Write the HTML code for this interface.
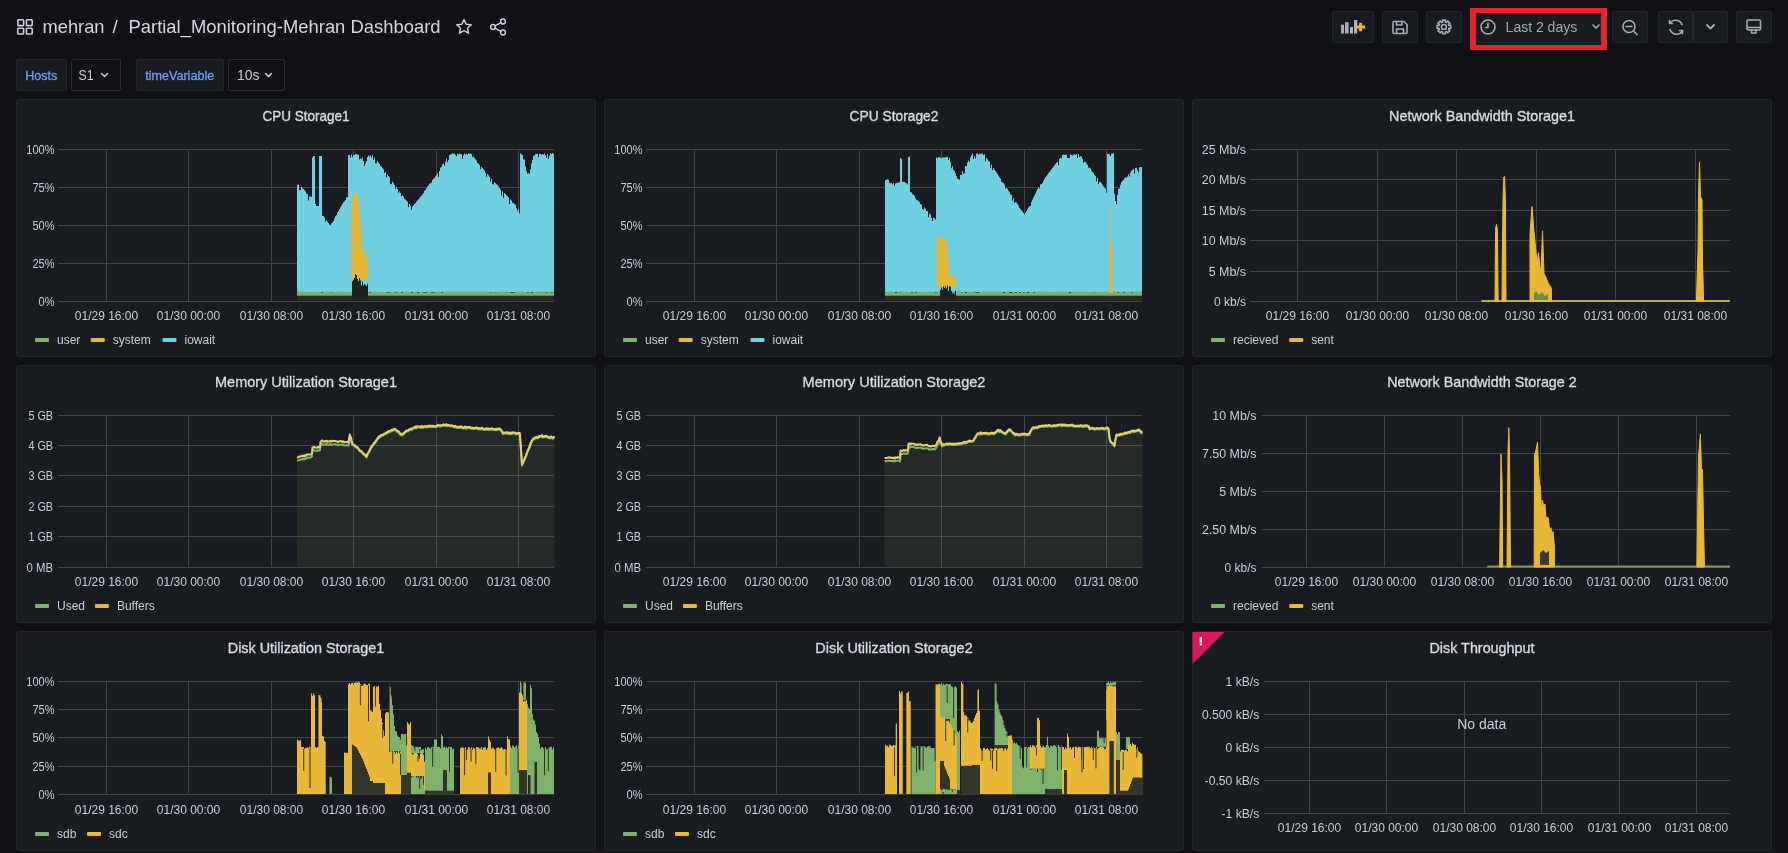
<!DOCTYPE html>
<html><head><meta charset="utf-8"><title>Grafana</title><style>
html,body{margin:0;padding:0}
body{width:1788px;height:853px;overflow:hidden;background:#111217;position:relative;font-family:"Liberation Sans",sans-serif;color:#ccccdc}
div{box-sizing:border-box}
.panel{position:absolute;background:#181b1f;border:1px solid #25272c;border-radius:3px}
.btn{position:absolute;top:11px;height:32px;background:#181b1f;border:1px solid #25272c;border-radius:2px}
.var{position:absolute;top:59px;height:32px;border-radius:2px}
</style></head><body>
<div class="panel" style="left:16px;top:99px;width:580px;height:258px"></div>
<div class="panel" style="left:604px;top:99px;width:580px;height:258px"></div>
<div class="panel" style="left:1192px;top:99px;width:580px;height:258px"></div>
<div class="panel" style="left:16px;top:365px;width:580px;height:258px"></div>
<div class="panel" style="left:604px;top:365px;width:580px;height:258px"></div>
<div class="panel" style="left:1192px;top:365px;width:580px;height:258px"></div>
<div class="panel" style="left:16px;top:631px;width:580px;height:220px"></div>
<div class="panel" style="left:604px;top:631px;width:580px;height:220px"></div>
<div class="panel" style="left:1192px;top:631px;width:580px;height:220px"></div>
<div class="var" style="left:16px;width:51px;background:#181b1f;border:1px solid #25272c"></div>
<div class="var" style="left:71px;width:50px;background:#111217;border:1px solid #2c2e33"></div>
<div class="var" style="left:136px;width:88px;background:#181b1f;border:1px solid #25272c"></div>
<div class="var" style="left:228px;width:57px;background:#111217;border:1px solid #2c2e33"></div>
<div class="btn" style="left:1332px;width:42px"></div>
<div class="btn" style="left:1382px;width:36px"></div>
<div class="btn" style="left:1426px;width:36px"></div>
<div class="btn" style="left:1476px;width:125px"></div>
<div class="btn" style="left:1612px;width:36px"></div>
<div class="btn" style="left:1658px;width:35px"></div>
<div class="btn" style="left:1693px;width:35px"></div>
<div class="btn" style="left:1736px;width:36px"></div>
<div style="position:absolute;left:1470px;top:8px;width:137px;height:42px;border-style:solid;border-color:#e3262b;border-width:5px 6px 5px 6px"></div>

<svg style="position:absolute;left:0;top:0" width="1788" height="100">
<g fill="none" stroke="#ccccdc" stroke-width="1.6">
<rect x="17.8" y="19.8" width="5.8" height="5.8" rx="0.8"/><rect x="26.4" y="19.8" width="5.8" height="5.8" rx="0.8"/>
<rect x="17.8" y="28.2" width="5.8" height="5.8" rx="0.8"/><rect x="26.4" y="28.2" width="5.8" height="5.8" rx="0.8"/>
</g>
<g fill="none" stroke="#ccccdc" stroke-width="1.5" stroke-linecap="round" stroke-linejoin="round">
<path d="M464 19.5L466.2 24.2L471.2 24.8L467.5 28.2L468.5 33.2L464 30.7L459.5 33.2L460.5 28.2L456.8 24.8L461.8 24.2Z"/>
<circle cx="493" cy="27" r="2.4"/><circle cx="503" cy="21.5" r="2.4"/><circle cx="503" cy="32.5" r="2.4"/>
<path d="M495 25.8L501 22.7M495 28.2L501 31.3"/>
<path d="M101.5 73.5L104.5 76.5L107.5 73.5"/>
<path d="M265.5 73.5L268.5 76.5L271.5 73.5"/>
</g>
<g fill="none" stroke="#a9aab4" stroke-width="1.6" stroke-linecap="round" stroke-linejoin="round">
<rect x="1341" y="24.7" width="3" height="8.8" fill="#a9adb8" stroke="none"/>
<rect x="1345" y="22.2" width="3.6" height="11.3" fill="#a9adb8" stroke="none"/>
<rect x="1350" y="27" width="3" height="6.5" fill="#a9b2bf" stroke="none"/>
<rect x="1354" y="20" width="3.2" height="13.5" fill="#a9b2bf" stroke="none"/>
<path d="M1360.6 22.8V31.3M1356 27H1365.2" stroke="#f2b440" stroke-width="3" stroke-linecap="butt"/>
<path d="M1394 21.5H1404L1407 24.5V32.5Q1407 33.5 1406 33.5H1394Q1393 33.5 1393 32.5V22.5Q1393 21.5 1394 21.5Z"/>
<path d="M1396.5 21.5V25H1402V21.5M1396.5 33.5V29H1403.5V33.5"/>
<circle cx="1443.9" cy="26.9" r="2.4"/>
<path d="M1448.9 25.5L1450.7 25.4L1450.7 28.4L1448.9 28.3L1448.4 29.4L1449.8 30.7L1447.7 32.8L1446.4 31.4L1445.3 31.9L1445.4 33.7L1442.4 33.7L1442.5 31.9L1441.4 31.4L1440.1 32.8L1438.0 30.7L1439.4 29.4L1438.9 28.3L1437.1 28.4L1437.1 25.4L1438.9 25.5L1439.4 24.4L1438.0 23.1L1440.1 21.0L1441.4 22.4L1442.5 21.9L1442.4 20.1L1445.4 20.1L1445.3 21.9L1446.4 22.4L1447.7 21.0L1449.8 23.1L1448.4 24.4Z"/>
<circle cx="1488" cy="27" r="7"/>
<path d="M1488 23V27.5H1485.5"/>
<path d="M1593 25L1596 28L1599 25"/>
<path d="M1707 25L1710.5 28.5L1714 25" stroke-width="1.8"/>
<circle cx="1629" cy="26.5" r="6"/>
<path d="M1633.5 31L1637 34.5M1626 26.5H1632"/>
<path d="M1670 23A7 7 0 0 1 1682 24.5M1682.5 31A7 7 0 0 1 1670 29.5"/>
<path d="M1669.5 20.5V23.5H1672.5M1682.5 33.5V30.5H1679.5"/>
<rect x="1747" y="20" width="13.5" height="10" rx="1"/>
<path d="M1747.5 27.5H1760M1751.5 30V33H1756V30"/>
</g>
</svg>
<svg style="position:absolute;left:0;top:0;will-change:transform" width="1788" height="853" font-family="Liberation Sans, sans-serif">
<rect x="58" y="149" width="496" height="1" fill="#404348"/>
<rect x="58" y="187" width="496" height="1" fill="#404348"/>
<rect x="58" y="225" width="496" height="1" fill="#404348"/>
<rect x="58" y="263" width="496" height="1" fill="#404348"/>
<rect x="58" y="301" width="496" height="1" fill="#404348"/>
<rect x="106" y="149" width="1" height="153" fill="#404348"/>
<rect x="188" y="149" width="1" height="153" fill="#404348"/>
<rect x="271" y="149" width="1" height="153" fill="#404348"/>
<rect x="353" y="149" width="1" height="153" fill="#404348"/>
<rect x="436" y="149" width="1" height="153" fill="#404348"/>
<rect x="518" y="149" width="1" height="153" fill="#404348"/>
<text x="54.5" y="153.8" font-size="12" text-anchor="end" fill="#ccccdc" textLength="28.2" lengthAdjust="spacingAndGlyphs">100%</text>
<text x="54.5" y="191.8" font-size="12" text-anchor="end" fill="#ccccdc" textLength="22.1" lengthAdjust="spacingAndGlyphs">75%</text>
<text x="54.5" y="229.8" font-size="12" text-anchor="end" fill="#ccccdc" textLength="22.1" lengthAdjust="spacingAndGlyphs">50%</text>
<text x="54.5" y="267.8" font-size="12" text-anchor="end" fill="#ccccdc" textLength="22.1" lengthAdjust="spacingAndGlyphs">25%</text>
<text x="54.5" y="305.8" font-size="12" text-anchor="end" fill="#ccccdc" textLength="16" lengthAdjust="spacingAndGlyphs">0%</text>
<text x="106.5" y="320" font-size="12" text-anchor="middle" fill="#ccccdc">01/29 16:00</text>
<text x="188.5" y="320" font-size="12" text-anchor="middle" fill="#ccccdc">01/30 00:00</text>
<text x="271.5" y="320" font-size="12" text-anchor="middle" fill="#ccccdc">01/30 08:00</text>
<text x="353.5" y="320" font-size="12" text-anchor="middle" fill="#ccccdc">01/30 16:00</text>
<text x="436.5" y="320" font-size="12" text-anchor="middle" fill="#ccccdc">01/31 00:00</text>
<text x="518.5" y="320" font-size="12" text-anchor="middle" fill="#ccccdc">01/31 08:00</text>
<rect x="35" y="338" width="14" height="4" rx="1" fill="#7EB26D"/>
<text x="57" y="344" font-size="12" text-anchor="start" fill="#ccccdc">user</text>
<rect x="90.7" y="338" width="14" height="4" rx="1" fill="#EAB839"/>
<text x="112.7" y="344" font-size="12" text-anchor="start" fill="#ccccdc">system</text>
<rect x="162.5" y="338" width="14" height="4" rx="1" fill="#6ED0E0"/>
<text x="184.5" y="344" font-size="12" text-anchor="start" fill="#ccccdc">iowait</text>
<rect x="297" y="295.8" width="257" height="5" fill="#262d24"/>
<path fill="#6ED0E0" d="M297 292V185.1H298V184.4H299V190.2H300V190H301V186.9H302V188.4H303V188.7H304V190H305V191.3H306V193.6H307V194H308V200.5H309V196.2H310V196.5H311V196.9H312V157.6H313V156H314V156.1H315V204.1H316V206H317V206.1H318V206H319V156.1H320V156H321V156H322V215.8H323V216H324V217.6H325V221.7H326V220.2H327V221.7H328V223.1H329V224.4H330V225.3H331V223.5H332V222.6H333V221.1H334V218.5H335V216.2H336V215.2H337V212.4H338V211H339V208.9H340V207.2H341V205.5H342V203.8H343V202.2H344V201.4H345V200.1H346V197.5H347V197.1H348V155.1H349V155H350V157.7H351V154.5H352V157.3H353V155.2H354V155H355V154.1H356V154.3H357V154.5H358V154.7H359V159.4H360V158.6H361V159H362V157.5H363V161.1H364V165.7H365V163.4H366V160.9H367V157H368V155.6H369V156.6H370V155.2H371V157.5H372V155.3H373V159.7H374V157.4H375V163.5H376V163.2H377V161.3H378V162.6H379V164.1H380V166.1H381V166.6H382V167.9H383V169.2H384V172.9H385V171.9H386V177.6H387V174.6H388V176H389V177.3H390V184.2H391V183.7H392V181.5H393V182.9H394V185H395V189H396V187.1H397V189.1H398V192.7H399V191.4H400V193H401V196H402V195.3H403V196.7H404V198.8H405V199.6H406V200.8H407V201.8H408V207.2H409V204.1H410V206.1H411V209.8H412V206.5H413V205.3H414V204.1H415V202.9H416V201.8H417V200.6H418V199.3H419V197.9H420V196.5H421V195.8H422V194.4H423V193.1H424V190.8H425V190.1H426V188.2H427V186.5H428V185.4H429V183.7H430V183.3H431V182.5H432V180.1H433V179H434V177.9H435V176.6H436V175.1H437V173.3H438V177.2H439V170.9H440V167.8H441V166.7H442V164.3H443V163.8H444V165.9H445V161.4H446V158.4H447V162.3H448V159.7H449V155H450V154.4H451V153.8H452V153.4H453V153.9H454V153.4H455V154.8H456V156.2H457V153.4H458V154.4H459V153.4H460V154H461V154.3H462V158.7H463V155.3H464V153.4H465V154.6H466V153.4H467V154.5H468V153.5H469V153.4H470V153.4H471V154H472V157.3H473V156.6H474V157.9H475V159.2H476V160.5H477V163H478V163.5H479V165.1H480V169.1H481V166.9H482V168H483V169.2H484V170.6H485V172.7H486V176.7H487V174.2H488V175.2H489V176.8H490V181.8H491V178.7H492V183.9H493V184.5H494V182.3H495V183.2H496V184.2H497V185.3H498V186.4H499V188H500V189.7H501V195.5H502V191.2H503V197.7H504V193H505V194.1H506V195.2H507V196.3H508V197.6H509V204H510V199.5H511V200.6H512V202.8H513V202.7H514V204.1H515V204.8H516V208.6H517V210.8H518V209.4H519V213.3H520V153.6H521V154.3H522V155H523V159.2H524V159.6H525V166.5H526V171.3H527V173.8H528V173.3H529V173.8H530V169.2H531V163.5H532V160H533V155.5H534V155.7H535V153.9H536V154.1H537V153.8H538V157.2H539V153.7H540V154.1H541V154.4H542V154.3H543V154.4H544V153.5H545V155.3H546V157.8H547V153.9H548V158.7H549V155.9H550V153.2H551V154H552V153.1H553V153.8H554V292H553V292H552V292H551V292H550V292H549V292H548V292H547V292H546V292H545V292H544V292H543V292H542V292H541V292H540V292H539V292H538V292H537V292H536V292H535V292H534V292H533V292H532V292H531V292H530V292H529V292H528V292H527V292H526V292H525V292H524V292H523V292H522V292H521V292H520V292H519V292H518V292H517V292H516V292H515V292H514V292H513V292H512V292H511V292H510V292H509V292H508V292H507V292H506V292H505V292H504V292H503V292H502V292H501V292H500V292H499V292H498V292H497V292H496V292H495V292H494V292H493V292H492V292H491V292H490V292H489V292H488V292H487V292H486V292H485V292H484V292H483V292H482V292H481V292H480V292H479V292H478V292H477V292H476V292H475V292H474V292H473V292H472V292H471V292H470V292H469V292H468V292H467V292H466V292H465V292H464V292H463V292H462V292H461V292H460V292H459V292H458V292H457V292H456V292H455V292H454V292H453V292H452V292H451V292H450V292H449V292H448V292H447V292H446V292H445V292H444V292H443V292H442V292H441V292H440V292H439V292H438V292H437V292H436V292H435V292H434V292H433V292H432V292H431V292H430V292H429V292H428V292H427V292H426V292H425V292H424V292H423V292H422V292H421V292H420V292H419V292H418V292H417V292H416V292H415V292H414V292H413V292H412V292H411V292H410V292H409V292H408V292H407V292H406V292H405V292H404V292H403V292H402V292H401V292H400V292H399V292H398V292H397V292H396V292H395V292H394V292H393V292H392V292H391V292H390V292H389V292H388V292H387V292H386V292H385V292H384V292H383V292H382V292H381V292H380V292H379V292H378V292H377V292H376V292H375V292H374V292H373V292H372V292H371V292H370V292H369V292H368V292H367V292H366V292H365V292H364V292H363V292H362V292H361V292H360V292H359V292H358V292H357V292H356V292H355V292H354V292H353V292H352V292H351V292H350V292H349V292H348V292H347V292H346V292H345V292H344V292H343V292H342V292H341V292H340V292H339V292H338V292H337V292H336V292H335V292H334V292H333V292H332V292H331V292H330V292H329V292H328V292H327V292H326V292H325V292H324V292H323V292H322V292H321V292H320V292H319V292H318V292H317V292H316V292H315V292H314V292H313V292H312V292H311V292H310V292H309V292H308V292H307V292H306V292H305V292H304V292H303V292H302V292H301V292H300V292H299V292H298V292H297Z"/>
<path fill="#7EB26D" d="M297 295.8V291.6H299V291.9H301V291.6H303V292H305V291.9H307V291.7H309V291.9H311V291.8H313V291.6H315V291.8H317V291.9H319V291.8H321V292.4H323V292.1H325V291.7H327V291.6H329V291.6H331V292.2H333V292H335V291.9H337V291.7H339V291.8H341V291.6H343V291.8H345V291.6H347V291.9H349V291.9H351V292H353V291.6H355V291.6H357V291.6H359V292H361V291.8H363V292.1H365V291.7H367V291.7H369V292.5H371V291.6H373V291.6H375V291.8H377V291.9H379V291.7H381V291.8H383V291.7H385V292H387V292.4H389V292.3H391V291.9H393V291.7H395V292.6H397V291.7H399V291.9H401V292.4H403V292H405V291.7H407V292.1H409V291.9H411V292.5H413V291.9H415V291.8H417V292.7H419V291.8H421V291.7H423V292.6H425V292.6H427V291.6H429V291.6H431V292.4H433V292.4H435V291.7H437V291.6H439V292H441V292.6H443V291.6H445V291.7H447V291.9H449V291.6H451V291.7H453V291.6H455V291.7H457V291.6H459V291.6H461V291.7H463V291.6H465V291.6H467V291.6H469V291.7H471V291.6H473V292.1H475V291.7H477V291.6H479V291.6H481V291.6H483V292.1H485V291.6H487V291.7H489V292.2H491V292.3H493V291.7H495V292.3H497V291.9H499V291.6H501V291.6H503V291.6H505V292.2H507V291.7H509V292.3H511V292.7H513V292.5H515V291.7H517V291.6H519V291.6H521V291.6H523V291.9H525V292H527V292.5H529V292H531V292.7H533V291.9H535V291.7H537V292.3H539V291.6H541V292.2H543V292.1H545V292.4H547V291.6H549V291.6H551V292.6H553V291.6H554V295.8H553V295.8H551V295.8H549V295.8H547V295.8H545V295.8H543V295.8H541V295.8H539V295.8H537V295.8H535V295.8H533V295.8H531V295.8H529V295.8H527V295.8H525V295.8H523V295.8H521V295.8H519V295.8H517V295.8H515V295.8H513V295.8H511V295.8H509V295.8H507V295.8H505V295.8H503V295.8H501V295.8H499V295.8H497V295.8H495V295.8H493V295.8H491V295.8H489V295.8H487V295.8H485V295.8H483V295.8H481V295.8H479V295.8H477V295.8H475V295.8H473V295.8H471V295.8H469V295.8H467V295.8H465V295.8H463V295.8H461V295.8H459V295.8H457V295.8H455V295.8H453V295.8H451V295.8H449V295.8H447V295.8H445V295.8H443V295.8H441V295.8H439V295.8H437V295.8H435V295.8H433V295.8H431V295.8H429V295.8H427V295.8H425V295.8H423V295.8H421V295.8H419V295.8H417V295.8H415V295.8H413V295.8H411V295.8H409V295.8H407V295.8H405V295.8H403V295.8H401V295.8H399V295.8H397V295.8H395V295.8H393V295.8H391V295.8H389V295.8H387V295.8H385V295.8H383V295.8H381V295.8H379V295.8H377V295.8H375V295.8H373V295.8H371V295.8H369V295.8H367V295.8H365V295.8H363V295.8H361V295.8H359V295.8H357V295.8H355V295.8H353V295.8H351V295.8H349V295.8H347V295.8H345V295.8H343V295.8H341V295.8H339V295.8H337V295.8H335V295.8H333V295.8H331V295.8H329V295.8H327V295.8H325V295.8H323V295.8H321V295.8H319V295.8H317V295.8H315V295.8H313V295.8H311V295.8H309V295.8H307V295.8H305V295.8H303V295.8H301V295.8H299V295.8H297Z"/>
<path fill="#EAB839" d="M351.5 279.6V202.5H352.5V194H353.5V195.3H354.5V195H355.5V192.2H356.5V194H357.5V197.8H358.5V205.4H359.5V215.4H360.5V228H361.5V253.8H362.5V249.1H363.5V248H364.5V250.7H365.5V256.4H366.5V257.5H367.5V261.1H368V279.6H367.5V279.6H366.5V279.6H365.5V279.6H364.5V279.6H363.5V279.6H362.5V279.6H361.5V279.6H360.5V279.6H359.5V279.6H358.5V279.6H357.5V279.6H356.5V279.6H355.5V279.6H354.5V279.6H353.5V279.6H352.5V279.6H351.5Z"/>
<path fill="#1e221d" d="M352 301V281.3H353V279.7H354V277.9H355V273.9H356V274.9H357V278.9H358V281.2H359V278.2H360V280.4H361V285.5H362V281.6H363V285.6H364V283.7H365V285.1H366V285.9H367V283.7H368V301H367V301H366V301H365V301H364V301H363V301H362V301H361V301H360V301H359V301H358V301H357V301H356V301H355V301H354V301H353V301H352Z"/>
<rect x="646" y="149" width="496" height="1" fill="#404348"/>
<rect x="646" y="187" width="496" height="1" fill="#404348"/>
<rect x="646" y="225" width="496" height="1" fill="#404348"/>
<rect x="646" y="263" width="496" height="1" fill="#404348"/>
<rect x="646" y="301" width="496" height="1" fill="#404348"/>
<rect x="694" y="149" width="1" height="153" fill="#404348"/>
<rect x="776" y="149" width="1" height="153" fill="#404348"/>
<rect x="859" y="149" width="1" height="153" fill="#404348"/>
<rect x="941" y="149" width="1" height="153" fill="#404348"/>
<rect x="1024" y="149" width="1" height="153" fill="#404348"/>
<rect x="1106" y="149" width="1" height="153" fill="#404348"/>
<text x="642.5" y="153.8" font-size="12" text-anchor="end" fill="#ccccdc" textLength="28.2" lengthAdjust="spacingAndGlyphs">100%</text>
<text x="642.5" y="191.8" font-size="12" text-anchor="end" fill="#ccccdc" textLength="22.1" lengthAdjust="spacingAndGlyphs">75%</text>
<text x="642.5" y="229.8" font-size="12" text-anchor="end" fill="#ccccdc" textLength="22.1" lengthAdjust="spacingAndGlyphs">50%</text>
<text x="642.5" y="267.8" font-size="12" text-anchor="end" fill="#ccccdc" textLength="22.1" lengthAdjust="spacingAndGlyphs">25%</text>
<text x="642.5" y="305.8" font-size="12" text-anchor="end" fill="#ccccdc" textLength="16" lengthAdjust="spacingAndGlyphs">0%</text>
<text x="694.5" y="320" font-size="12" text-anchor="middle" fill="#ccccdc">01/29 16:00</text>
<text x="776.5" y="320" font-size="12" text-anchor="middle" fill="#ccccdc">01/30 00:00</text>
<text x="859.5" y="320" font-size="12" text-anchor="middle" fill="#ccccdc">01/30 08:00</text>
<text x="941.5" y="320" font-size="12" text-anchor="middle" fill="#ccccdc">01/30 16:00</text>
<text x="1024.5" y="320" font-size="12" text-anchor="middle" fill="#ccccdc">01/31 00:00</text>
<text x="1106.5" y="320" font-size="12" text-anchor="middle" fill="#ccccdc">01/31 08:00</text>
<rect x="623" y="338" width="14" height="4" rx="1" fill="#7EB26D"/>
<text x="645" y="344" font-size="12" text-anchor="start" fill="#ccccdc">user</text>
<rect x="678.7" y="338" width="14" height="4" rx="1" fill="#EAB839"/>
<text x="700.7" y="344" font-size="12" text-anchor="start" fill="#ccccdc">system</text>
<rect x="750.5" y="338" width="14" height="4" rx="1" fill="#6ED0E0"/>
<text x="772.5" y="344" font-size="12" text-anchor="start" fill="#ccccdc">iowait</text>
<rect x="885" y="295.8" width="257" height="5" fill="#262d24"/>
<path fill="#6ED0E0" d="M885 292V180.3H886V179.8H887V179.3H888V179.7H889V182.4H890V183.3H891V183.1H892V184.5H893V183.1H894V185.9H895V183.4H896V182.7H897V182.8H898V182.4H899V182.3H900V158H901V159H902V181.9H903V181.7H904V182H905V182.7H906V183H907V184.5H908V157.2H909V156.4H910V192H911V192.6H912V194.2H913V194.6H914V195.8H915V198.2H916V199.8H917V200.4H918V200.9H919V202.3H920V203.9H921V204.8H922V208.9H923V209.7H924V207.5H925V208.7H926V210.9H927V211.1H928V217.3H929V213.4H930V214.5H931V217.9H932V220.9H933V217.5H934V218.2H935V219.5H936V157.4H937V158.3H938V157.3H939V157.2H940V157.6H941V158.8H942V157.3H943V157.5H944V157.4H945V157.2H946V157H947V157H948V160.1H949V157.8H950V162.3H951V168.3H952V166.2H953V169.7H954V171H955V173.3H956V175.9H957V178.6H958V178.9H959V179.8H960V174.9H961V174.8H962V171.2H963V173.9H964V173H965V165.9H966V166.3H967V162.4H968V160.7H969V162.1H970V157.2H971V155.3H972V153.5H973V159.1H974V156.3H975V158.5H976V153.5H977V153.5H978V154.4H979V153.5H980V154H981V153.5H982V153.5H983V155H984V154.3H985V161.4H986V158.1H987V159.2H988V160.9H989V161.8H990V168.1H991V164.8H992V170H993V168.1H994V169.8H995V171.1H996V172.4H997V173.8H998V175.4H999V177.5H1000V178.4H1001V181.8H1002V182.3H1003V182.9H1004V184.4H1005V188.5H1006V187.7H1007V188.9H1008V190.7H1009V192.2H1010V194.5H1011V195.1H1012V200.6H1013V197.9H1014V202.7H1015V202H1016V202.5H1017V204H1018V205.5H1019V208H1020V209.3H1021V210.2H1022V211.5H1023V213H1024V214.7H1025V212.8H1026V211.1H1027V209.3H1028V207.6H1029V206.2H1030V206H1031V201.8H1032V199.7H1033V197.6H1034V195.4H1035V193.4H1036V191.2H1037V189.1H1038V187.3H1039V188.6H1040V184.4H1041V183.9H1042V183.1H1043V181.1H1044V178.8H1045V177.3H1046V176.2H1047V174.6H1048V173.2H1049V171.9H1050V170.5H1051V169.6H1052V167.9H1053V166.5H1054V165.3H1055V163.9H1056V162.8H1057V161.7H1058V165.3H1059V158.9H1060V158H1061V158.2H1062V155.1H1063V154.6H1064V154.9H1065V154.4H1066V154.5H1067V158H1068V158.1H1069V158H1070V154.3H1071V155H1072V155.5H1073V154.2H1074V154.2H1075V155H1076V154.1H1077V157.9H1078V154.1H1079V156.9H1080V156.2H1081V156.6H1082V159H1083V162.8H1084V161.7H1085V161.9H1086V163.2H1087V165H1088V167.5H1089V167.8H1090V168.6H1091V170.7H1092V172.3H1093V172.7H1094V174.9H1095V176.1H1096V181.6H1097V178H1098V184H1099V181.9H1100V182H1101V183.3H1102V184.7H1103V186.5H1104V187.8H1105V188.8H1106V192.8H1107V153.7H1108V154H1109V154.5H1110V156H1111V153.5H1112V153.5H1113V153.6H1114V193.7H1115V201H1116V204.3H1117V194.7H1118V189.1H1119V188.2H1120V184.8H1121V182.2H1122V181H1123V179.9H1124V178.6H1125V177.4H1126V177.6H1127V176.6H1128V174.2H1129V176.5H1130V172.6H1131V170.7H1132V169.9H1133V169H1134V173.7H1135V168H1136V167.7H1137V170.3H1138V172.2H1139V167.3H1140V167.2H1141V167H1142V292H1141V292H1140V292H1139V292H1138V292H1137V292H1136V292H1135V292H1134V292H1133V292H1132V292H1131V292H1130V292H1129V292H1128V292H1127V292H1126V292H1125V292H1124V292H1123V292H1122V292H1121V292H1120V292H1119V292H1118V292H1117V292H1116V292H1115V292H1114V292H1113V292H1112V292H1111V292H1110V292H1109V292H1108V292H1107V292H1106V292H1105V292H1104V292H1103V292H1102V292H1101V292H1100V292H1099V292H1098V292H1097V292H1096V292H1095V292H1094V292H1093V292H1092V292H1091V292H1090V292H1089V292H1088V292H1087V292H1086V292H1085V292H1084V292H1083V292H1082V292H1081V292H1080V292H1079V292H1078V292H1077V292H1076V292H1075V292H1074V292H1073V292H1072V292H1071V292H1070V292H1069V292H1068V292H1067V292H1066V292H1065V292H1064V292H1063V292H1062V292H1061V292H1060V292H1059V292H1058V292H1057V292H1056V292H1055V292H1054V292H1053V292H1052V292H1051V292H1050V292H1049V292H1048V292H1047V292H1046V292H1045V292H1044V292H1043V292H1042V292H1041V292H1040V292H1039V292H1038V292H1037V292H1036V292H1035V292H1034V292H1033V292H1032V292H1031V292H1030V292H1029V292H1028V292H1027V292H1026V292H1025V292H1024V292H1023V292H1022V292H1021V292H1020V292H1019V292H1018V292H1017V292H1016V292H1015V292H1014V292H1013V292H1012V292H1011V292H1010V292H1009V292H1008V292H1007V292H1006V292H1005V292H1004V292H1003V292H1002V292H1001V292H1000V292H999V292H998V292H997V292H996V292H995V292H994V292H993V292H992V292H991V292H990V292H989V292H988V292H987V292H986V292H985V292H984V292H983V292H982V292H981V292H980V292H979V292H978V292H977V292H976V292H975V292H974V292H973V292H972V292H971V292H970V292H969V292H968V292H967V292H966V292H965V292H964V292H963V292H962V292H961V292H960V292H959V292H958V292H957V292H956V292H955V292H954V292H953V292H952V292H951V292H950V292H949V292H948V292H947V292H946V292H945V292H944V292H943V292H942V292H941V292H940V292H939V292H938V292H937V292H936V292H935V292H934V292H933V292H932V292H931V292H930V292H929V292H928V292H927V292H926V292H925V292H924V292H923V292H922V292H921V292H920V292H919V292H918V292H917V292H916V292H915V292H914V292H913V292H912V292H911V292H910V292H909V292H908V292H907V292H906V292H905V292H904V292H903V292H902V292H901V292H900V292H899V292H898V292H897V292H896V292H895V292H894V292H893V292H892V292H891V292H890V292H889V292H888V292H887V292H886V292H885Z"/>
<path fill="#7EB26D" d="M885 295.8V292.1H887V291.9H889V291.7H891V291.6H893V292H895V292.7H897V291.7H899V292.3H901V291.6H903V291.8H905V291.6H907V291.7H909V291.9H911V292.4H913V291.8H915V292.4H917V291.6H919V291.6H921V291.7H923V292H925V292H927V291.6H929V291.6H931V291.6H933V291.7H935V292.4H937V291.6H939V291.6H941V292.5H943V292.4H945V292.1H947V291.6H949V291.6H951V291.6H953V292.5H955V291.6H957V291.6H959V291.6H961V292.2H963V291.6H965V292.7H967V291.6H969V291.9H971V291.6H973V291.6H975V292.4H977V292.8H979V291.6H981V291.7H983V291.6H985V291.6H987V291.7H989V291.8H991V291.8H993V291.7H995V291.6H997V291.8H999V291.7H1001V291.6H1003V292.7H1005V291.8H1007V291.6H1009V292.7H1011V292.7H1013V291.7H1015V292.7H1017V291.6H1019V292.5H1021V291.6H1023V292.4H1025V292H1027V292.7H1029V291.6H1031V291.9H1033V292.6H1035V291.6H1037V291.6H1039V291.8H1041V291.6H1043V291.6H1045V291.6H1047V291.7H1049V291.9H1051V291.7H1053V291.9H1055V291.6H1057V291.6H1059V291.8H1061V291.6H1063V291.6H1065V291.6H1067V291.9H1069V292.7H1071V291.7H1073V291.6H1075V291.6H1077V292H1079V292.2H1081V291.6H1083V291.7H1085V291.6H1087V291.8H1089V292.1H1091V291.7H1093V292.2H1095V291.6H1097V292H1099V291.7H1101V291.9H1103V291.6H1105V291.7H1107V291.9H1109V291.6H1111V291.8H1113V291.6H1115V291.7H1117V292.6H1119V291.9H1121V291.8H1123V292.4H1125V292H1127V291.8H1129V291.7H1131V292.4H1133V291.8H1135V291.7H1137V291.7H1139V291.6H1141V291.6H1142V295.8H1141V295.8H1139V295.8H1137V295.8H1135V295.8H1133V295.8H1131V295.8H1129V295.8H1127V295.8H1125V295.8H1123V295.8H1121V295.8H1119V295.8H1117V295.8H1115V295.8H1113V295.8H1111V295.8H1109V295.8H1107V295.8H1105V295.8H1103V295.8H1101V295.8H1099V295.8H1097V295.8H1095V295.8H1093V295.8H1091V295.8H1089V295.8H1087V295.8H1085V295.8H1083V295.8H1081V295.8H1079V295.8H1077V295.8H1075V295.8H1073V295.8H1071V295.8H1069V295.8H1067V295.8H1065V295.8H1063V295.8H1061V295.8H1059V295.8H1057V295.8H1055V295.8H1053V295.8H1051V295.8H1049V295.8H1047V295.8H1045V295.8H1043V295.8H1041V295.8H1039V295.8H1037V295.8H1035V295.8H1033V295.8H1031V295.8H1029V295.8H1027V295.8H1025V295.8H1023V295.8H1021V295.8H1019V295.8H1017V295.8H1015V295.8H1013V295.8H1011V295.8H1009V295.8H1007V295.8H1005V295.8H1003V295.8H1001V295.8H999V295.8H997V295.8H995V295.8H993V295.8H991V295.8H989V295.8H987V295.8H985V295.8H983V295.8H981V295.8H979V295.8H977V295.8H975V295.8H973V295.8H971V295.8H969V295.8H967V295.8H965V295.8H963V295.8H961V295.8H959V295.8H957V295.8H955V295.8H953V295.8H951V295.8H949V295.8H947V295.8H945V295.8H943V295.8H941V295.8H939V295.8H937V295.8H935V295.8H933V295.8H931V295.8H929V295.8H927V295.8H925V295.8H923V295.8H921V295.8H919V295.8H917V295.8H915V295.8H913V295.8H911V295.8H909V295.8H907V295.8H905V295.8H903V295.8H901V295.8H899V295.8H897V295.8H895V295.8H893V295.8H891V295.8H889V295.8H887V295.8H885Z"/>
<path fill="#EAB839" d="M937 287V235.8H938V238.9H939V236.8H940V235.2H941V238.3H942V237.3H943V239.3H944V238.5H945V240.6H946V242.3H947V251.6H948V265.3H949V275.8H950V274.6H951V275.1H952V277.4H953V273.9H954V276.3H955V279.4H956V287H955V287H954V287H953V287H952V287H951V287H950V287H949V287H948V287H947V287H946V287H945V287H944V287H943V287H942V287H941V287H940V287H939V287H938V287H937Z"/>
<path fill="#EAB839" d="M1109.5 293V239.4H1110.5V241.5H1111.5V244.5H1112.5V293H1111.5V293H1110.5V293H1109.5Z"/>
<path fill="#1e221d" d="M940 301V290H941V287.5H942V289.8H943V286.5H944V287.9H945V286.3H946V288.4H947V285.7H948V291.1H949V286.2H950V286.7H951V291H952V293.6H953V293.5H954V293.9H955V290.6H956V301H955V301H954V301H953V301H952V301H951V301H950V301H949V301H948V301H947V301H946V301H945V301H944V301H943V301H942V301H941V301H940Z"/>
<rect x="1110.5" y="207" width="1.2" height="35" fill="#c9c070"/>
<rect x="58" y="415" width="496" height="1" fill="#404348"/>
<rect x="58" y="445" width="496" height="1" fill="#404348"/>
<rect x="58" y="475" width="496" height="1" fill="#404348"/>
<rect x="58" y="506" width="496" height="1" fill="#404348"/>
<rect x="58" y="536" width="496" height="1" fill="#404348"/>
<rect x="58" y="567" width="496" height="1" fill="#404348"/>
<rect x="106" y="415" width="1" height="153" fill="#404348"/>
<rect x="188" y="415" width="1" height="153" fill="#404348"/>
<rect x="271" y="415" width="1" height="153" fill="#404348"/>
<rect x="353" y="415" width="1" height="153" fill="#404348"/>
<rect x="436" y="415" width="1" height="153" fill="#404348"/>
<rect x="518" y="415" width="1" height="153" fill="#404348"/>
<text x="53" y="419.8" font-size="12" text-anchor="end" fill="#ccccdc" textLength="24.6" lengthAdjust="spacingAndGlyphs">5 GB</text>
<text x="53" y="449.8" font-size="12" text-anchor="end" fill="#ccccdc" textLength="24.6" lengthAdjust="spacingAndGlyphs">4 GB</text>
<text x="53" y="479.8" font-size="12" text-anchor="end" fill="#ccccdc" textLength="24.6" lengthAdjust="spacingAndGlyphs">3 GB</text>
<text x="53" y="510.8" font-size="12" text-anchor="end" fill="#ccccdc" textLength="24.6" lengthAdjust="spacingAndGlyphs">2 GB</text>
<text x="53" y="540.8" font-size="12" text-anchor="end" fill="#ccccdc" textLength="24.6" lengthAdjust="spacingAndGlyphs">1 GB</text>
<text x="53" y="571.8" font-size="12" text-anchor="end" fill="#ccccdc" textLength="26.6" lengthAdjust="spacingAndGlyphs">0 MB</text>
<text x="106.5" y="586" font-size="12" text-anchor="middle" fill="#ccccdc">01/29 16:00</text>
<text x="188.5" y="586" font-size="12" text-anchor="middle" fill="#ccccdc">01/30 00:00</text>
<text x="271.5" y="586" font-size="12" text-anchor="middle" fill="#ccccdc">01/30 08:00</text>
<text x="353.5" y="586" font-size="12" text-anchor="middle" fill="#ccccdc">01/30 16:00</text>
<text x="436.5" y="586" font-size="12" text-anchor="middle" fill="#ccccdc">01/31 00:00</text>
<text x="518.5" y="586" font-size="12" text-anchor="middle" fill="#ccccdc">01/31 08:00</text>
<rect x="35" y="604" width="14" height="4" rx="1" fill="#7EB26D"/>
<text x="57" y="610" font-size="12" text-anchor="start" fill="#ccccdc">Used</text>
<rect x="94.9" y="604" width="14" height="4" rx="1" fill="#EAB839"/>
<text x="116.9" y="610" font-size="12" text-anchor="start" fill="#ccccdc">Buffers</text>
<path fill="rgba(150,178,130,0.1)" d="M297 567L297 460.4L298 460.6L299 460L300 459.8L301 459.3L302 459.6L303 458.9L304 459.5L305 458.4L306 458.9L307 457.6L308 457.7L309 457.6L310 457.7L311 457.3L312 456.4L312.5 450.5L313 450.8L314 450L315 450.8L316 450.7L317 450.9L318 450.1L319 450.7L320 450.4L320.5 444.7L321 444.5L322 443.7L323 444.8L324 444.7L325 444.1L326 444.9L327 444L328 445L329 444.6L330 444L331 444.9L332 444.4L333 444.2L334 444.3L335 444.2L336 444.7L337 444.5L338 445.3L339 444.7L340 444.4L341 444.4L342 445.2L343 444.6L344 445.5L345 445.4L346 445.2L347 445.2L348 444.9L348.5 445.7L349 442.3L349.8 437.8L350 438.6L351 440.6L352 443.5L352.4 444.9L353 445.1L354 446.1L355 446.4L356 447.7L357 448L358 448.8L359 450.3L360 451.4L361 452L362 452.5L363 454.2L364 454.8L365 455.6L366 456.4L366.5 457.4L367 455.9L368 453.9L369 452.3L370 450.4L371 448.4L372 446.6L373 445.8L374 443.9L375 443.2L376 441.5L377 440.3L378 438.7L379 437.4L380 437.6L381 436L382 435.8L383 435.7L384 434.7L385 434.5L386 433.6L387 433.4L388 432.6L389 432L390 431.9L391 431.3L392 430.7L393 430.8L394 429.9L394.7 430.2L395 429.9L396 430.5L397 431.8L398 432L399 433L400 434.3L401 435.2L401.7 435.5L402 435.4L403 434.6L404 434L405 432.9L406 431.9L407 431.4L408 431.5L409 430.6L410 430L411 429.6L412 429.9L413 428.9L414 428.6L415 427.9L415.8 427.5L416 428.5L417 427.4L418 427.6L419 427.5L420 427.4L421 428L422 427.1L423 428L424 427.4L425 427.3L426 427.3L427 427.6L428 426.8L429 427L430 426.7L431 427.2L432 426.5L433 427.2L434 426.8L435 427.2L436 427L437 426.7L438 425.9L439 426.2L440 426.5L441 426.2L442 426.2L443 425.7L444 425.5L445 425.9L446 426.1L446.4 425.3L447 426.2L448 425.8L449 426L450 426.4L451 426.6L452 426.3L453 426.9L454 427.3L455 426.9L456 427.7L457 427.7L458 427.9L459 427.7L460 427.9L461 427.3L462 427.9L463 428.6L464 428.6L465 427.6L466 428.8L467 427.9L468 428.3L469 428.1L470 428.2L471 428.7L472 429L473 428.6L474 429.1L475 428.9L476 428.6L477 428.5L478 429.4L479 429.1L480 429.7L481 429L482 428.8L483 429.8L484 429.7L485 430L486 429.3L487 429.9L488 429.2L489 430L490 429.8L491 429.5L492 429.4L493 429.9L494 430.1L495 429.9L496 430.4L497 429.7L498 429.9L499 429.6L500 429.7L501 430.6L502 432.3L503 434L504 433.6L505 433.8L506 433.4L507 433.3L508 434.1L509 433.4L510 434.1L511 434.3L512 433.4L513 433.7L514 433.5L515 433.6L516 434.4L517 434.1L518 434.1L519 433.9L519.8 434.1L520 436.9L521 451L522 465.5L523 463.2L524 461L525 459L526 456.5L527 453.4L528 451L529 448.8L530 446.1L531 443.3L532 441.5L533 439.5L534 439.5L535 438.5L536 438.1L537 438.3L538 438.2L539 437L540 437L541 437.1L541.4 436.6L542 436.4L543 437.5L544 437.3L545 437L546 436.9L547 437.3L548 437.8L549 438L550 438.5L551 437.5L552 438.3L553 438.7L554 438L554.5 438.2L554.5 567Z"/>
<path fill="none" stroke="#7EB26D" stroke-width="2" stroke-linejoin="round" d="M297 460.4L298 460.6L299 460L300 459.8L301 459.3L302 459.6L303 458.9L304 459.5L305 458.4L306 458.9L307 457.6L308 457.7L309 457.6L310 457.7L311 457.3L312 456.4L312.5 450.5L313 450.8L314 450L315 450.8L316 450.7L317 450.9L318 450.1L319 450.7L320 450.4L320.5 444.7L321 444.5L322 443.7L323 444.8L324 444.7L325 444.1L326 444.9L327 444L328 445L329 444.6L330 444L331 444.9L332 444.4L333 444.2L334 444.3L335 444.2L336 444.7L337 444.5L338 445.3L339 444.7L340 444.4L341 444.4L342 445.2L343 444.6L344 445.5L345 445.4L346 445.2L347 445.2L348 444.9L348.5 445.7L349 442.3L349.8 437.8L350 438.6L351 440.6L352 443.5L352.4 444.9L353 445.1L354 446.1L355 446.4L356 447.7L357 448L358 448.8L359 450.3L360 451.4L361 452L362 452.5L363 454.2L364 454.8L365 455.6L366 456.4L366.5 457.4L367 455.9L368 453.9L369 452.3L370 450.4L371 448.4L372 446.6L373 445.8L374 443.9L375 443.2L376 441.5L377 440.3L378 438.7L379 437.4L380 437.6L381 436L382 435.8L383 435.7L384 434.7L385 434.5L386 433.6L387 433.4L388 432.6L389 432L390 431.9L391 431.3L392 430.7L393 430.8L394 429.9L394.7 430.2L395 429.9L396 430.5L397 431.8L398 432L399 433L400 434.3L401 435.2L401.7 435.5L402 435.4L403 434.6L404 434L405 432.9L406 431.9L407 431.4L408 431.5L409 430.6L410 430L411 429.6L412 429.9L413 428.9L414 428.6L415 427.9L415.8 427.5L416 428.5L417 427.4L418 427.6L419 427.5L420 427.4L421 428L422 427.1L423 428L424 427.4L425 427.3L426 427.3L427 427.6L428 426.8L429 427L430 426.7L431 427.2L432 426.5L433 427.2L434 426.8L435 427.2L436 427L437 426.7L438 425.9L439 426.2L440 426.5L441 426.2L442 426.2L443 425.7L444 425.5L445 425.9L446 426.1L446.4 425.3L447 426.2L448 425.8L449 426L450 426.4L451 426.6L452 426.3L453 426.9L454 427.3L455 426.9L456 427.7L457 427.7L458 427.9L459 427.7L460 427.9L461 427.3L462 427.9L463 428.6L464 428.6L465 427.6L466 428.8L467 427.9L468 428.3L469 428.1L470 428.2L471 428.7L472 429L473 428.6L474 429.1L475 428.9L476 428.6L477 428.5L478 429.4L479 429.1L480 429.7L481 429L482 428.8L483 429.8L484 429.7L485 430L486 429.3L487 429.9L488 429.2L489 430L490 429.8L491 429.5L492 429.4L493 429.9L494 430.1L495 429.9L496 430.4L497 429.7L498 429.9L499 429.6L500 429.7L501 430.6L502 432.3L503 434L504 433.6L505 433.8L506 433.4L507 433.3L508 434.1L509 433.4L510 434.1L511 434.3L512 433.4L513 433.7L514 433.5L515 433.6L516 434.4L517 434.1L518 434.1L519 433.9L519.8 434.1L520 436.9L521 451L522 465.5L523 463.2L524 461L525 459L526 456.5L527 453.4L528 451L529 448.8L530 446.1L531 443.3L532 441.5L533 439.5L534 439.5L535 438.5L536 438.1L537 438.3L538 438.2L539 437L540 437L541 437.1L541.4 436.6L542 436.4L543 437.5L544 437.3L545 437L546 436.9L547 437.3L548 437.8L549 438L550 438.5L551 437.5L552 438.3L553 438.7L554 438L554.5 438.2"/>
<path fill="none" stroke="#e9cf6a" stroke-width="2" stroke-linejoin="round" d="M297 457.2L298 457.5L299 456.8L300 456.6L301 456L302 456.4L303 455.6L304 456.4L305 455.1L306 455.8L307 454.3L308 454.5L309 454.4L310 454.6L311 454.2L312 453.1L312.5 447.4L313 447.7L314 446.7L315 447.6L316 447.6L317 447.9L318 446.8L319 447.5L320 447.1L320.5 441.6L321 441.4L322 440.4L323 441.7L324 441.6L325 440.9L326 441.8L327 440.8L328 441.9L329 441.4L330 440.7L331 441.8L332 441.1L333 440.8L334 441L335 440.9L336 441.5L337 441.3L338 442.2L339 441.5L340 441.1L341 441L342 442L343 441.2L344 442.5L345 442.2L346 442L347 442L348 441.7L348.5 442.6L349 439L349.8 434.5L350 435.4L351 437.5L352 442.7L352.4 443.8L353 444.1L354 445.1L355 445.3L356 446.7L357 446.9L358 447.7L359 449.3L360 450.5L361 451L362 451.5L363 453.3L364 453.8L365 454.7L366 455.4L366.5 456.5L367 454.8L368 452.8L369 451.3L370 449.4L371 447.3L372 445.5L373 444.9L374 442.8L375 442.3L376 440.5L377 439.4L378 437.7L379 436.2L380 436.6L381 434.9L382 434.8L383 434.8L384 433.7L385 433.6L386 432.6L387 432.5L388 431.5L389 431L390 431L391 430.3L392 429.7L393 429.9L394 428.9L394.7 429.3L395 428.9L396 429.5L397 430.9L398 431L399 431.9L400 433.3L401 434.2L401.7 434.4L402 434.3L403 433.5L404 433L405 431.9L406 430.9L407 430.4L408 430.6L409 429.6L410 428.9L411 428.5L412 429L413 427.9L414 427.5L415 426.8L415.8 426.4L416 427.6L417 426.3L418 426.5L419 426.4L420 426.4L421 427.1L422 425.9L423 427.1L424 426.4L425 426.3L426 426.3L427 426.7L428 425.7L429 426L430 425.6L431 426.2L432 425.5L433 426.3L434 425.8L435 426.3L436 426.1L437 425.7L438 424.7L439 425.2L440 425.5L441 425.2L442 425.3L443 424.6L444 424.4L445 424.9L446 425.1L446.4 424.1L447 425.3L448 424.8L449 424.9L450 425.4L451 425.6L452 425.2L453 426L454 426.4L455 425.8L456 426.8L457 426.8L458 427L459 426.7L460 426.9L461 426.2L462 426.9L463 427.7L464 427.7L465 426.5L466 427.9L467 426.8L468 427.3L469 427L470 427.1L471 427.7L472 428.1L473 427.5L474 428.1L475 427.9L476 427.5L477 427.4L478 428.5L479 428.1L480 428.8L481 428L482 427.7L483 428.9L484 428.8L485 429.1L486 428.2L487 429.1L488 428.2L489 429.1L490 428.9L491 428.4L492 428.3L493 428.9L494 429.1L495 428.9L496 429.5L497 428.6L498 428.9L499 428.5L500 428.6L501 429.6L502 431.4L503 433L504 432.6L505 432.8L506 432.3L507 432.2L508 433.1L509 432.3L510 433.2L511 433.4L512 432.2L513 432.6L514 432.4L515 432.5L516 433.6L517 433.2L518 433.2L519 432.8L519.8 433.2L520 435.9L521 449.9L522 464.4L523 462.1L524 460L525 458L526 455.5L527 452.3L528 449.9L529 447.9L530 445.1L531 442.2L532 440.5L533 438.6L534 438.6L535 437.4L536 437L537 437.3L538 437.3L539 435.9L540 436L541 436.1L541.4 435.6L542 435.2L543 436.6L544 436.4L545 435.9L546 435.8L547 436.2L548 436.8L549 437.1L550 437.6L551 436.4L552 437.3L553 437.7L554 436.9L554.5 437.2"/>
<rect x="646" y="415" width="496" height="1" fill="#404348"/>
<rect x="646" y="445" width="496" height="1" fill="#404348"/>
<rect x="646" y="475" width="496" height="1" fill="#404348"/>
<rect x="646" y="506" width="496" height="1" fill="#404348"/>
<rect x="646" y="536" width="496" height="1" fill="#404348"/>
<rect x="646" y="567" width="496" height="1" fill="#404348"/>
<rect x="694" y="415" width="1" height="153" fill="#404348"/>
<rect x="776" y="415" width="1" height="153" fill="#404348"/>
<rect x="859" y="415" width="1" height="153" fill="#404348"/>
<rect x="941" y="415" width="1" height="153" fill="#404348"/>
<rect x="1024" y="415" width="1" height="153" fill="#404348"/>
<rect x="1106" y="415" width="1" height="153" fill="#404348"/>
<text x="641" y="419.8" font-size="12" text-anchor="end" fill="#ccccdc" textLength="24.6" lengthAdjust="spacingAndGlyphs">5 GB</text>
<text x="641" y="449.8" font-size="12" text-anchor="end" fill="#ccccdc" textLength="24.6" lengthAdjust="spacingAndGlyphs">4 GB</text>
<text x="641" y="479.8" font-size="12" text-anchor="end" fill="#ccccdc" textLength="24.6" lengthAdjust="spacingAndGlyphs">3 GB</text>
<text x="641" y="510.8" font-size="12" text-anchor="end" fill="#ccccdc" textLength="24.6" lengthAdjust="spacingAndGlyphs">2 GB</text>
<text x="641" y="540.8" font-size="12" text-anchor="end" fill="#ccccdc" textLength="24.6" lengthAdjust="spacingAndGlyphs">1 GB</text>
<text x="641" y="571.8" font-size="12" text-anchor="end" fill="#ccccdc" textLength="26.6" lengthAdjust="spacingAndGlyphs">0 MB</text>
<text x="694.5" y="586" font-size="12" text-anchor="middle" fill="#ccccdc">01/29 16:00</text>
<text x="776.5" y="586" font-size="12" text-anchor="middle" fill="#ccccdc">01/30 00:00</text>
<text x="859.5" y="586" font-size="12" text-anchor="middle" fill="#ccccdc">01/30 08:00</text>
<text x="941.5" y="586" font-size="12" text-anchor="middle" fill="#ccccdc">01/30 16:00</text>
<text x="1024.5" y="586" font-size="12" text-anchor="middle" fill="#ccccdc">01/31 00:00</text>
<text x="1106.5" y="586" font-size="12" text-anchor="middle" fill="#ccccdc">01/31 08:00</text>
<rect x="623" y="604" width="14" height="4" rx="1" fill="#7EB26D"/>
<text x="645" y="610" font-size="12" text-anchor="start" fill="#ccccdc">Used</text>
<rect x="682.9" y="604" width="14" height="4" rx="1" fill="#EAB839"/>
<text x="704.9" y="610" font-size="12" text-anchor="start" fill="#ccccdc">Buffers</text>
<path fill="rgba(150,178,130,0.1)" d="M884.6 567L884.6 461.5L885.6 461L886.6 461.1L887.6 461L888.6 460.7L889.6 460.5L890.6 460.9L891.6 461L892.6 461.3L893.6 460.8L894.6 461.5L895.6 460.6L896.6 461.2L897.6 460.5L898.6 460.7L899.6 460.6L900 461.5L900.5 453.7L900.6 453.6L901.6 453.9L902.6 454L903.6 453.4L904.6 453.9L905.6 453.3L906.6 453.7L907.6 453.9L908 453.4L908.5 447.1L908.6 447.2L909.6 446.5L910.6 447.4L911.6 446.9L912.6 447.1L913.6 447.1L914.6 447.3L915.6 448.1L916.6 447.6L917.6 448.2L918.6 447.5L919.6 447.7L920.6 447.5L921.6 448.1L922.6 448.8L923.6 448.4L924.6 448.7L925.6 448.2L926.6 448.2L927.6 448.4L928.6 449.4L929.6 449.2L930.6 449.5L931.6 449.5L932.6 449L933.6 449L934.6 449.6L935.2 449.1L935.6 448.7L936.6 446.9L937.6 444.7L938.6 443.6L939.6 440.7L940.6 442.4L941.6 444.3L942 446.5L942.6 445.7L943.6 445.2L944.6 445.4L945.6 445.2L946.6 444.6L947.6 444.7L948.6 444.9L949.6 444.4L950.6 444.5L951.6 444.9L952.6 444.7L953.6 445.1L954.6 444.6L955.6 445L956.6 444.8L957.2 444.4L957.6 444.5L958.6 444.5L959.6 444.1L960.6 444.2L961.6 443.9L962.6 443.7L963.6 443L964.6 443.5L965 443.5L965.6 442.7L966.6 443.1L967.6 442.4L968.6 442L969.6 441.6L970.6 442.1L971.6 441.9L972.6 441.6L973.6 441.2L973.9 440.7L974.6 439.2L975.6 437.9L976.6 435.9L977.4 434.6L977.6 434.4L978.6 434.1L979.6 434.6L980.6 433.5L981.6 434.6L982.6 434.1L983.6 434L984.6 434.2L985.6 433.9L986.6 434L987.6 434.5L988.6 434.2L989.6 434.5L990.6 434L991.6 433.7L992.6 434L993.6 434.3L994 433.8L994.6 433.7L995.6 433.1L996.6 432.1L997.6 431L998.5 431.2L998.6 430.8L999.6 432L1000.6 431.4L1001.6 432.6L1002.6 432.9L1003.6 433.6L1004.6 434L1005.5 434.4L1005.6 434.1L1006.6 433L1007.6 432L1008.6 430.9L1009 430.2L1009.6 430.5L1010.6 431.1L1011.6 432.2L1012.6 433.1L1013.6 434.3L1014.6 434.4L1015 435.4L1015.6 435.3L1016.6 434.8L1017.6 435.2L1018.6 435.5L1019.6 435.4L1020.6 435.3L1021.6 434.8L1022.6 434.9L1023.6 434.9L1024.6 434.8L1025.6 434.9L1026.6 435.4L1027.6 435.3L1028.6 434.8L1029 435.2L1029.6 434.1L1030.6 431.8L1031.6 430.3L1032.6 428.6L1033.6 428.2L1034.6 428.7L1035.6 428.4L1036.6 427.9L1037.6 428.3L1038.6 427.6L1039.6 427.1L1040.6 427.2L1041.6 426.9L1042.6 426.5L1043.2 426.5L1043.6 426.9L1044.6 426.8L1045.6 426.1L1046.6 426.7L1047.6 426.6L1048.6 426L1049.6 426.2L1050.6 426.6L1051.6 426.7L1052.6 426.6L1053.6 426.1L1054.6 426.7L1055.6 426.2L1056.6 426.3L1057.6 425.9L1058.6 425.9L1059.6 425.6L1060.6 425.6L1061.6 426.2L1062.6 425.4L1063.6 426L1064.6 425.7L1065 425.6L1065.6 425.8L1066.6 426.3L1067.6 426L1068.6 425.9L1069.6 426.1L1070.6 426.2L1071.6 425.6L1072.6 425.9L1073.6 426.7L1074.6 426.6L1075.6 426.5L1076.6 426.9L1077.6 426.6L1078.6 426.6L1079.6 426.9L1080.6 426.2L1081.6 426.6L1082.6 427L1083.6 426.4L1084.6 427L1085.6 426.4L1086.6 426.4L1087.6 426.8L1088.6 427.2L1089 427.3L1089.4 429.2L1089.6 429.5L1090.6 429.2L1091.6 429.1L1092.6 428.9L1093.6 429.1L1094.6 429.7L1095.6 429.3L1096.6 429.1L1097.6 429.2L1098.6 429.3L1099.6 429.4L1100.6 429.1L1101.6 429.2L1102.6 428.9L1103.6 429.4L1104.6 429.5L1105.6 429.1L1106.6 428.6L1107.6 428.9L1108.3 429.2L1108.6 430.8L1109.6 438.8L1110 440.8L1110.6 442.3L1111.6 443.2L1112.6 444.1L1113.6 445.2L1114.4 446.4L1114.6 444.9L1115.6 439.8L1116.2 436.5L1116.6 435.5L1117.6 436.1L1118.6 435.5L1119.6 435.6L1120.6 434.6L1121.6 435.1L1122.6 434.5L1123.6 434.5L1124.6 434L1125 433.6L1125.6 433.9L1126.6 434.1L1127.6 433.2L1128.6 432.9L1129.6 433.1L1130.6 432.6L1131.6 431.9L1132.6 432L1133.6 431.6L1134.6 432.1L1135.6 431.6L1136.6 431.3L1137.6 430.9L1138.6 430.4L1139 430.5L1139.6 431.5L1140.6 432L1141.6 433.3L1142.5 433.7L1142.5 567Z"/>
<path fill="none" stroke="#7EB26D" stroke-width="2" stroke-linejoin="round" d="M884.6 461.5L885.6 461L886.6 461.1L887.6 461L888.6 460.7L889.6 460.5L890.6 460.9L891.6 461L892.6 461.3L893.6 460.8L894.6 461.5L895.6 460.6L896.6 461.2L897.6 460.5L898.6 460.7L899.6 460.6L900 461.5L900.5 453.7L900.6 453.6L901.6 453.9L902.6 454L903.6 453.4L904.6 453.9L905.6 453.3L906.6 453.7L907.6 453.9L908 453.4L908.5 447.1L908.6 447.2L909.6 446.5L910.6 447.4L911.6 446.9L912.6 447.1L913.6 447.1L914.6 447.3L915.6 448.1L916.6 447.6L917.6 448.2L918.6 447.5L919.6 447.7L920.6 447.5L921.6 448.1L922.6 448.8L923.6 448.4L924.6 448.7L925.6 448.2L926.6 448.2L927.6 448.4L928.6 449.4L929.6 449.2L930.6 449.5L931.6 449.5L932.6 449L933.6 449L934.6 449.6L935.2 449.1L935.6 448.7L936.6 446.9L937.6 444.7L938.6 443.6L939.6 440.7L940.6 442.4L941.6 444.3L942 446.5L942.6 445.7L943.6 445.2L944.6 445.4L945.6 445.2L946.6 444.6L947.6 444.7L948.6 444.9L949.6 444.4L950.6 444.5L951.6 444.9L952.6 444.7L953.6 445.1L954.6 444.6L955.6 445L956.6 444.8L957.2 444.4L957.6 444.5L958.6 444.5L959.6 444.1L960.6 444.2L961.6 443.9L962.6 443.7L963.6 443L964.6 443.5L965 443.5L965.6 442.7L966.6 443.1L967.6 442.4L968.6 442L969.6 441.6L970.6 442.1L971.6 441.9L972.6 441.6L973.6 441.2L973.9 440.7L974.6 439.2L975.6 437.9L976.6 435.9L977.4 434.6L977.6 434.4L978.6 434.1L979.6 434.6L980.6 433.5L981.6 434.6L982.6 434.1L983.6 434L984.6 434.2L985.6 433.9L986.6 434L987.6 434.5L988.6 434.2L989.6 434.5L990.6 434L991.6 433.7L992.6 434L993.6 434.3L994 433.8L994.6 433.7L995.6 433.1L996.6 432.1L997.6 431L998.5 431.2L998.6 430.8L999.6 432L1000.6 431.4L1001.6 432.6L1002.6 432.9L1003.6 433.6L1004.6 434L1005.5 434.4L1005.6 434.1L1006.6 433L1007.6 432L1008.6 430.9L1009 430.2L1009.6 430.5L1010.6 431.1L1011.6 432.2L1012.6 433.1L1013.6 434.3L1014.6 434.4L1015 435.4L1015.6 435.3L1016.6 434.8L1017.6 435.2L1018.6 435.5L1019.6 435.4L1020.6 435.3L1021.6 434.8L1022.6 434.9L1023.6 434.9L1024.6 434.8L1025.6 434.9L1026.6 435.4L1027.6 435.3L1028.6 434.8L1029 435.2L1029.6 434.1L1030.6 431.8L1031.6 430.3L1032.6 428.6L1033.6 428.2L1034.6 428.7L1035.6 428.4L1036.6 427.9L1037.6 428.3L1038.6 427.6L1039.6 427.1L1040.6 427.2L1041.6 426.9L1042.6 426.5L1043.2 426.5L1043.6 426.9L1044.6 426.8L1045.6 426.1L1046.6 426.7L1047.6 426.6L1048.6 426L1049.6 426.2L1050.6 426.6L1051.6 426.7L1052.6 426.6L1053.6 426.1L1054.6 426.7L1055.6 426.2L1056.6 426.3L1057.6 425.9L1058.6 425.9L1059.6 425.6L1060.6 425.6L1061.6 426.2L1062.6 425.4L1063.6 426L1064.6 425.7L1065 425.6L1065.6 425.8L1066.6 426.3L1067.6 426L1068.6 425.9L1069.6 426.1L1070.6 426.2L1071.6 425.6L1072.6 425.9L1073.6 426.7L1074.6 426.6L1075.6 426.5L1076.6 426.9L1077.6 426.6L1078.6 426.6L1079.6 426.9L1080.6 426.2L1081.6 426.6L1082.6 427L1083.6 426.4L1084.6 427L1085.6 426.4L1086.6 426.4L1087.6 426.8L1088.6 427.2L1089 427.3L1089.4 429.2L1089.6 429.5L1090.6 429.2L1091.6 429.1L1092.6 428.9L1093.6 429.1L1094.6 429.7L1095.6 429.3L1096.6 429.1L1097.6 429.2L1098.6 429.3L1099.6 429.4L1100.6 429.1L1101.6 429.2L1102.6 428.9L1103.6 429.4L1104.6 429.5L1105.6 429.1L1106.6 428.6L1107.6 428.9L1108.3 429.2L1108.6 430.8L1109.6 438.8L1110 440.8L1110.6 442.3L1111.6 443.2L1112.6 444.1L1113.6 445.2L1114.4 446.4L1114.6 444.9L1115.6 439.8L1116.2 436.5L1116.6 435.5L1117.6 436.1L1118.6 435.5L1119.6 435.6L1120.6 434.6L1121.6 435.1L1122.6 434.5L1123.6 434.5L1124.6 434L1125 433.6L1125.6 433.9L1126.6 434.1L1127.6 433.2L1128.6 432.9L1129.6 433.1L1130.6 432.6L1131.6 431.9L1132.6 432L1133.6 431.6L1134.6 432.1L1135.6 431.6L1136.6 431.3L1137.6 430.9L1138.6 430.4L1139 430.5L1139.6 431.5L1140.6 432L1141.6 433.3L1142.5 433.7"/>
<path fill="none" stroke="#e9cf6a" stroke-width="2" stroke-linejoin="round" d="M884.6 458.5L885.6 457.9L886.6 457.9L887.6 457.8L888.6 457.4L889.6 457.2L890.6 457.7L891.6 457.8L892.6 458.2L893.6 457.6L894.6 458.5L895.6 457.3L896.6 458L897.6 457.1L898.6 457.4L899.6 457.3L900 458.5L900.5 450.6L900.6 450.4L901.6 450.8L902.6 450.9L903.6 450.1L904.6 450.8L905.6 450L906.6 450.6L907.6 450.8L908 450.1L908.5 443.9L908.6 444L909.6 443.2L910.6 444.3L911.6 443.6L912.6 443.8L913.6 443.8L914.6 444L915.6 445L916.6 444.4L917.6 445.1L918.6 444.2L919.6 444.4L920.6 444.2L921.6 444.9L922.6 445.7L923.6 445.2L924.6 445.6L925.6 444.9L926.6 444.8L927.6 445.2L928.6 446.3L929.6 446L930.6 446.5L931.6 446.3L932.6 445.7L933.6 445.7L934.6 446.4L935.2 445.8L935.6 445.5L936.6 443.7L937.6 441.4L938.6 440.5L939.6 437.4L940.6 441.5L941.6 443.2L942 445.7L942.6 444.7L943.6 444.1L944.6 444.4L945.6 444.3L946.6 443.6L947.6 443.7L948.6 443.9L949.6 443.4L950.6 443.4L951.6 444L952.6 443.6L953.6 444.2L954.6 443.6L955.6 444L956.6 443.8L957.2 443.3L957.6 443.4L958.6 443.5L959.6 443.1L960.6 443.2L961.6 443L962.6 442.8L963.6 441.9L964.6 442.6L965 442.6L965.6 441.7L966.6 442.2L967.6 441.4L968.6 441L969.6 440.5L970.6 441.1L971.6 440.9L972.6 440.7L973.6 440.2L973.9 439.6L974.6 438.1L975.6 436.9L976.6 434.9L977.4 433.7L977.6 433.5L978.6 433.2L979.6 433.8L980.6 432.4L981.6 433.7L982.6 433.1L983.6 433L984.6 433.2L985.6 432.8L986.6 433L987.6 433.6L988.6 433.3L989.6 433.6L990.6 433L991.6 432.6L992.6 433L993.6 433.4L994 432.7L994.6 432.8L995.6 432.2L996.6 431.1L997.6 429.9L998.5 430.3L998.6 429.8L999.6 431.2L1000.6 430.2L1001.6 431.6L1002.6 431.9L1003.6 432.7L1004.6 433.1L1005.5 433.5L1005.6 433.2L1006.6 432L1007.6 431L1008.6 430L1009 429.2L1009.6 429.5L1010.6 430L1011.6 431.1L1012.6 432.1L1013.6 433.4L1014.6 433.3L1015 434.5L1015.6 434.4L1016.6 433.8L1017.6 434.2L1018.6 434.7L1019.6 434.5L1020.6 434.4L1021.6 433.8L1022.6 433.8L1023.6 433.8L1024.6 433.7L1025.6 433.9L1026.6 434.5L1027.6 434.3L1028.6 433.7L1029 434.2L1029.6 433.1L1030.6 430.7L1031.6 429.2L1032.6 427.6L1033.6 427.1L1034.6 427.7L1035.6 427.5L1036.6 426.9L1037.6 427.5L1038.6 426.5L1039.6 426L1040.6 426.1L1041.6 425.9L1042.6 425.4L1043.2 425.5L1043.6 426L1044.6 425.8L1045.6 425L1046.6 425.8L1047.6 425.6L1048.6 424.9L1049.6 425.1L1050.6 425.7L1051.6 425.8L1052.6 425.7L1053.6 425L1054.6 425.8L1055.6 425.2L1056.6 425.4L1057.6 424.8L1058.6 424.8L1059.6 424.5L1060.6 424.5L1061.6 425.2L1062.6 424.3L1063.6 425.1L1064.6 424.7L1065 424.5L1065.6 424.8L1066.6 425.4L1067.6 425.1L1068.6 424.9L1069.6 425.1L1070.6 425.2L1071.6 424.5L1072.6 424.8L1073.6 425.8L1074.6 425.7L1075.6 425.6L1076.6 426L1077.6 425.7L1078.6 425.7L1079.6 426L1080.6 425.1L1081.6 425.5L1082.6 426.1L1083.6 425.3L1084.6 426L1085.6 425.2L1086.6 425.3L1087.6 425.7L1088.6 426.3L1089 426.4L1089.4 428.2L1089.6 428.5L1090.6 428.1L1091.6 428L1092.6 427.8L1093.6 428.1L1094.6 428.8L1095.6 428.4L1096.6 428.1L1097.6 428.3L1098.6 428.3L1099.6 428.5L1100.6 428.1L1101.6 428.2L1102.6 427.8L1103.6 428.4L1104.6 428.6L1105.6 428.2L1106.6 427.5L1107.6 427.8L1108.3 428.2L1108.6 429.7L1109.6 437.9L1110 439.7L1110.6 441.4L1111.6 442.3L1112.6 443.2L1113.6 444.2L1114.4 445.6L1114.6 443.9L1115.6 438.9L1116.2 435.7L1116.6 434.4L1117.6 435.3L1118.6 434.5L1119.6 434.7L1120.6 433.5L1121.6 434.2L1122.6 433.5L1123.6 433.6L1124.6 432.9L1125 432.4L1125.6 433L1126.6 433.2L1127.6 432.2L1128.6 431.9L1129.6 432.2L1130.6 431.6L1131.6 430.7L1132.6 431L1133.6 430.5L1134.6 431.2L1135.6 430.7L1136.6 430.4L1137.6 429.9L1138.6 429.4L1139 429.5L1139.6 430.6L1140.6 430.9L1141.6 432.4L1142.5 432.6"/>
<rect x="58" y="681" width="496" height="1" fill="#404348"/>
<rect x="58" y="709" width="496" height="1" fill="#404348"/>
<rect x="58" y="737" width="496" height="1" fill="#404348"/>
<rect x="58" y="766" width="496" height="1" fill="#404348"/>
<rect x="58" y="794" width="496" height="1" fill="#404348"/>
<rect x="106" y="681" width="1" height="114" fill="#404348"/>
<rect x="188" y="681" width="1" height="114" fill="#404348"/>
<rect x="271" y="681" width="1" height="114" fill="#404348"/>
<rect x="353" y="681" width="1" height="114" fill="#404348"/>
<rect x="436" y="681" width="1" height="114" fill="#404348"/>
<rect x="518" y="681" width="1" height="114" fill="#404348"/>
<text x="54.5" y="685.8" font-size="12" text-anchor="end" fill="#ccccdc" textLength="28.2" lengthAdjust="spacingAndGlyphs">100%</text>
<text x="54.5" y="713.8" font-size="12" text-anchor="end" fill="#ccccdc" textLength="22.1" lengthAdjust="spacingAndGlyphs">75%</text>
<text x="54.5" y="741.8" font-size="12" text-anchor="end" fill="#ccccdc" textLength="22.1" lengthAdjust="spacingAndGlyphs">50%</text>
<text x="54.5" y="770.8" font-size="12" text-anchor="end" fill="#ccccdc" textLength="22.1" lengthAdjust="spacingAndGlyphs">25%</text>
<text x="54.5" y="798.8" font-size="12" text-anchor="end" fill="#ccccdc" textLength="16" lengthAdjust="spacingAndGlyphs">0%</text>
<text x="106.5" y="814" font-size="12" text-anchor="middle" fill="#ccccdc">01/29 16:00</text>
<text x="188.5" y="814" font-size="12" text-anchor="middle" fill="#ccccdc">01/30 00:00</text>
<text x="271.5" y="814" font-size="12" text-anchor="middle" fill="#ccccdc">01/30 08:00</text>
<text x="353.5" y="814" font-size="12" text-anchor="middle" fill="#ccccdc">01/30 16:00</text>
<text x="436.5" y="814" font-size="12" text-anchor="middle" fill="#ccccdc">01/31 00:00</text>
<text x="518.5" y="814" font-size="12" text-anchor="middle" fill="#ccccdc">01/31 08:00</text>
<rect x="35" y="832" width="14" height="4" rx="1" fill="#7EB26D"/>
<text x="57" y="838" font-size="12" text-anchor="start" fill="#ccccdc">sdb</text>
<rect x="87" y="832" width="14" height="4" rx="1" fill="#EAB839"/>
<text x="109" y="838" font-size="12" text-anchor="start" fill="#ccccdc">sdc</text>
<path fill="#33342b" d="M297 741.9H298V794.5H297ZM298 742.2H299V794.5H298ZM299 742.5H300V794.5H299ZM300 742.8H301V794.5H300ZM301 749.7H302V794.5H301ZM302 749.7H303V794.5H302ZM303 749.7H304V794.5H303ZM304 749.7H305V794.5H304ZM305 749.7H306V794.5H305ZM306 749.7H307V794.5H306ZM307 749.7H308V794.5H307ZM308 749.7H309V794.5H308ZM309 749.7H310V794.5H309ZM310 749.7H311V794.5H310ZM311 696.3H312V794.5H311ZM312 696.3H313V794.5H312ZM313 696.3H314V794.5H313ZM314 696.3H315V794.5H314ZM315 749.7H316V794.5H315ZM316 749.7H317V794.5H316ZM317 749.7H318V794.5H317ZM318 694.8H319V794.5H318ZM319 697.1H320V794.5H319ZM320 699.5H321V794.5H320ZM321 701.8H322V794.5H321ZM322 738.1H323V794.5H322ZM323 739.6H324V794.5H323ZM324 741.2H325V794.5H324ZM325 742.7H326V794.5H325ZM329 779H330V794.5H329ZM330 779H331V794.5H330ZM331 779H332V794.5H331ZM344 755.6H345V794.5H344ZM345 755.6H346V794.5H345ZM346 755.6H347V794.5H346ZM347 755.6H348V794.5H347ZM348 686H349V794.5H348ZM349 686H350V794.5H349ZM350 686H351V794.5H350ZM351 686H352V794.5H351ZM352 685.9H353V794.5H352ZM353 685.7H354V794.5H353ZM354 685.5H355V794.5H354ZM355 684.5H356V794.5H355ZM356 684.5H357V794.5H356ZM357 684.5H358V794.5H357ZM358 684.5H359V794.5H358ZM359 684.5H360V794.5H359ZM360 685.6H361V794.5H360ZM361 685.8H362V794.5H361ZM362 685.9H363V794.5H362ZM363 686.1H364V794.5H363ZM364 686.2H365V794.5H364ZM365 686.4H366V794.5H365ZM366 686.5H367V794.5H366ZM367 686.6H368V794.5H367ZM368 686.8H369V794.5H368ZM369 686.9H370V794.5H369ZM370 713H371V794.5H370ZM371 713H372V794.5H371ZM372 713H373V794.5H372ZM373 689H374V794.5H373ZM374 689H375V794.5H374ZM375 689H376V794.5H375ZM376 689H377V794.5H376ZM377 689H378V794.5H377ZM378 689H379V794.5H378ZM379 706.2H380V794.5H379ZM380 712.8H381V794.5H380ZM381 719.2H382V794.5H381ZM382 725.8H383V794.5H382ZM383 732.2H384V794.5H383ZM384 738.8H385V794.5H384ZM385 715H386V794.5H385ZM386 715H387V794.5H386ZM387 715H388V794.5H387ZM388 715H389V794.5H388ZM389 682.9H390V794.5H389ZM390 690.9H391V794.5H390ZM391 699H392V794.5H391ZM392 707.8H393V794.5H392ZM393 717.5H394V794.5H393ZM394 727.2H395V794.5H394ZM395 732.8H396V794.5H395ZM396 734.2H397V794.5H396ZM397 735.8H398V794.5H397ZM398 737.2H399V794.5H398ZM399 738.8H400V794.5H399ZM400 740.2H401V794.5H400ZM401 737H402V794.5H401ZM402 737H403V794.5H402ZM403 737H404V794.5H403ZM404 737H405V794.5H404ZM405 737H406V794.5H405ZM406 737H407V794.5H406ZM407 725H408V794.5H407ZM408 725H409V794.5H408ZM409 725H410V794.5H409ZM410 725H411V794.5H410ZM411 748.1H412V794.5H411ZM412 748.2H413V794.5H412ZM413 748.4H414V794.5H413ZM414 748.5H415V794.5H414ZM415 748.7H416V794.5H415ZM416 748.8H417V794.5H416ZM417 749H418V794.5H417ZM418 749.2H419V794.5H418ZM419 749.3H420V794.5H419ZM420 749.5H421V794.5H420ZM421 749.6H422V794.5H421ZM422 749.8H423V794.5H422ZM423 749.9H424V794.5H423ZM424 763H425V794.5H424ZM425 749.7H426V794.5H425ZM426 749.7H427V794.5H426ZM427 749.7H428V794.5H427ZM428 749.7H429V794.5H428ZM429 749.7H430V794.5H429ZM430 749.7H431V794.5H430ZM431 749.7H432V794.5H431ZM432 749.7H433V794.5H432ZM433 749.7H434V794.5H433ZM434 739.5H435V794.5H434ZM435 740.9H436V794.5H435ZM436 742.3H437V794.5H436ZM437 749.7H438V794.5H437ZM438 749.7H439V794.5H438ZM439 749.7H440V794.5H439ZM440 749.7H441V794.5H440ZM441 737.2H442V794.5H441ZM442 738.4H443V794.5H442ZM443 749.7H444V794.5H443ZM444 749.7H445V794.5H444ZM445 749.7H446V794.5H445ZM446 749.7H447V794.5H446ZM447 749.7H448V794.5H447ZM448 749.7H449V794.5H448ZM449 749.7H450V794.5H449ZM450 749.7H451V794.5H450ZM451 749.7H452V794.5H451ZM452 749.7H453V794.5H452ZM453 749.7H454V794.5H453ZM460 750H461V794.5H460ZM461 750H462V794.5H461ZM462 750H463V794.5H462ZM463 750H464V794.5H463ZM464 750H465V794.5H464ZM465 750H466V794.5H465ZM466 750H467V794.5H466ZM467 750H468V794.5H467ZM468 750H469V794.5H468ZM469 750H470V794.5H469ZM470 750H471V794.5H470ZM471 750H472V794.5H471ZM472 750H473V794.5H472ZM473 750H474V794.5H473ZM474 750H475V794.5H474ZM475 750H476V794.5H475ZM476 750H477V794.5H476ZM477 750H478V794.5H477ZM478 750H479V794.5H478ZM479 750H480V794.5H479ZM480 750H481V794.5H480ZM481 750H482V794.5H481ZM482 750H483V794.5H482ZM483 750H484V794.5H483ZM484 750H485V794.5H484ZM485 750H486V794.5H485ZM486 750H487V794.5H486ZM487 750H488V794.5H487ZM488 738.3H489V794.5H488ZM489 740.2H490V794.5H489ZM490 742.1H491V794.5H490ZM491 750H492V794.5H491ZM492 750H493V794.5H492ZM493 750H494V794.5H493ZM494 750H495V794.5H494ZM495 750H496V794.5H495ZM496 750H497V794.5H496ZM497 750H498V794.5H497ZM498 750H499V794.5H498ZM499 750H500V794.5H499ZM500 750H501V794.5H500ZM501 750H502V794.5H501ZM502 750H503V794.5H502ZM503 750H504V794.5H503ZM504 750H505V794.5H504ZM505 750H506V794.5H505ZM506 750H507V794.5H506ZM507 738.3H508V794.5H507ZM508 740.2H509V794.5H508ZM509 742.1H510V794.5H509ZM510 748.4H511V794.5H510ZM511 748.4H512V794.5H511ZM512 748.4H513V794.5H512ZM513 748.4H514V794.5H513ZM514 748.4H515V794.5H514ZM515 748.4H516V794.5H515ZM516 748.4H517V794.5H516ZM517 748.4H518V794.5H517ZM518 748.4H519V794.5H518ZM519 695.6H520V794.5H519ZM520 684.5H521V794.5H520ZM521 684.5H522V794.5H521ZM522 695.6H523V794.5H522ZM523 684.5H524V794.5H523ZM524 685.1H525V794.5H524ZM525 685.7H526V794.5H525ZM526 703H527V794.5H526ZM527 707.2H528V794.5H527ZM528 709.5H529V794.5H528ZM529 711.8H530V794.5H529ZM530 686.6H531V794.5H530ZM531 690.9H532V794.5H531ZM532 716.6H533V794.5H532ZM533 719.9H534V794.5H533ZM534 723.1H535V794.5H534ZM535 726.4H536V794.5H535ZM536 732.9H537V794.5H536ZM537 736.6H538V794.5H537ZM538 740.4H539V794.5H538ZM539 744.1H540V794.5H539ZM540 749.8H541V794.5H540ZM541 749.8H542V794.5H541ZM542 749.8H543V794.5H542ZM543 749.8H544V794.5H543ZM544 749.8H545V794.5H544ZM545 749.8H546V794.5H545ZM546 749.8H547V794.5H546ZM547 749.8H548V794.5H547ZM548 749.8H549V794.5H548ZM549 749.8H550V794.5H549ZM550 749.8H551V794.5H550ZM551 749.8H552V794.5H551ZM552 749.8H553V794.5H552ZM553 749.8H554V794.5H553Z"/>
<path fill="#7EB26D" d="M329.5 794V776.6H330.5V776.9H331.5V778.6H332V794H331.5V794H330.5V794H329.5ZM355 700V682.2H356V682.3H357V682.5H358V681.6H359V682.3H360V700H359V700H358V700H357V700H356V700H355ZM389.7 751V686.7H390.7V695.5H391.7V698.8H392V751H391.7V751H390.7V751H389.7ZM392 751V705.1H393V714.5H394V726.1H395V751H394V751H393V751H392ZM395 751V731.2H396V731.3H397V735.6H398V737H399V737H400V738.4H401V751H400V751H399V751H398V751H397V751H396V751H395ZM401 775V734.1H402V734H403V734.8H404V734H405V734.1H406V734.2H407V775H406V775H405V775H404V775H403V775H402V775H401ZM411 753V745.1H412V745.9H413V746H414V747.7H415V746.5H416V747.1H417V746.7H418V747.5H419V746.9H420V746.7H421V749.6H422V749.7H423V749H424V753H423V753H422V753H421V753H420V753H419V753H418V753H417V753H416V753H415V753H414V753H413V753H412V753H411ZM411 794V777.5H412V776.3H413V776.2H414V776.3H415V776H416V777.8H417V776.5H418V778.2H419V776.4H420V778.8H421V778.2H422V776H423V776.1H424V778.5H425V794H424V794H423V794H422V794H421V794H420V794H419V794H418V794H417V794H416V794H415V794H414V794H413V794H412V794H411ZM425 790.7V747.4H426V749.6H427V747.2H428V746.7H429V747.9H430V748.5H431V746.9H432V746.7H433V747H434V790.7H433V790.7H432V790.7H431V790.7H430V790.7H429V790.7H428V790.7H427V790.7H426V790.7H425ZM434 790.7V739.3H435V739.6H436V739.3H437V790.7H436V790.7H435V790.7H434ZM437 790.7V746.9H438V746.7H439V746.7H440V748.6H441V790.7H440V790.7H439V790.7H438V790.7H437ZM441 790.7V734.3H442V736.3H443V790.7H442V790.7H441ZM443 770V747.3H444V746.8H445V748.3H446V746.8H447V770H446V770H445V770H444V770H443ZM447 790.7V747.9H448V746.7H449V747.2H450V746.8H451V746.9H452V749.5H453V748.6H454V790.7H453V790.7H452V790.7H451V790.7H450V790.7H449V790.7H448V790.7H447ZM510 794V745.7H511V747.7H512V745.5H513V745.9H514V747.6H515V746.6H516V745.4H517V748.3H518V745.5H519V794H518V794H517V794H516V794H515V794H514V794H513V794H512V794H511V794H510ZM520 693V681.7H521V683.3H521.5V693H521V693H520ZM523.5 700V682.1H524.5V682.7H525.5V682.9H526V700H525.5V700H524.5V700H523.5ZM527 794V704.2H528V707.5H529V709H530V794H529V794H528V794H527ZM530 794V684.7H531V688.3H532V794H531V794H530ZM532 794V714.2H533V719.6H534V720.8H535V724.4H536V794H535V794H534V794H533V794H532ZM536 794V732.1H537V733.7H538V737.4H539V743.6H540V794H539V794H538V794H537V794H536ZM540 794V748.8H541V747H542V746.9H543V748.4H544V749.5H545V746.9H546V749.5H547V749.1H548V747.9H549V747.3H550V746.8H551V746.8H552V749.6H553V747H554V794H553V794H552V794H551V794H550V794H549V794H548V794H547V794H546V794H545V794H544V794H543V794H542V794H541V794H540Z"/>
<path fill="#EAB839" d="M297 794V739.5H298V740.5H299V740.8H300V739.9H301V794H300V794H299V794H298V794H297ZM301 794V746.7H302V747.1H303V746.9H304V748.7H305V748.1H306V747.8H307V747.6H308V748H309V746.8H310V747.3H311V794H310V794H309V794H308V794H307V794H306V794H305V794H304V794H303V794H302V794H301ZM311 794V693.4H312V695.8H313V693.3H314V695.3H315V794H314V794H313V794H312V794H311ZM315 794V746.7H316V748.1H317V747H318V747.2H318.5V794H318V794H317V794H316V794H315ZM318.5 794V695.1H319.5V695.3H320.5V697.7H321.5V701.9H322V794H321.5V794H320.5V794H319.5V794H318.5ZM322 794V735.8H323V736.6H324V741.1H325V742.1H325.7V794H325V794H324V794H323V794H322ZM344 794V752.6H345V753.1H346V752.7H347V752.9H348V794H347V794H346V794H345V794H344ZM348 794V684.2H349V683.1H350V684.5H351V683H352V794H351V794H350V794H349V794H348ZM352 744.4V683H353V684.7H354V683H355V682.8H356V683.2H357V747.6H356V746.8H355V746H354V745.2H353V744.4H352ZM357 749V682.8H358V682.7H359V682.4H360V684.2H361V685.6H362V685.8H363V759H362V757H361V755H360V753H359V751H358V749H357ZM363 761.3V684.4H364V683.6H365V683.8H366V684.9H367V685H368V683.8H369V684.1H370V776.7H369V774.1H368V771.6H367V769H366V766.4H365V763.9H364V761.3H363ZM370 781V710.4H371V710.8H372V712H373V781H372V781H371V781H370ZM373 783V686.8H374V686H375V688H376V686.6H377V686.8H378V686.1H379V783H378V783H377V783H376V783H375V783H374V783H373ZM379 783V703.8H380V710.2H381V718H382V722.8H383V730.2H384V735.8H385V783H384V783H383V783H382V783H381V783H380V783H379ZM385 794V713.5H386V712H387V712.2H388V712.4H389V794H388V794H387V794H386V794H385ZM389 794V752.2H390V751H391V751.6H392V751.1H393V751.2H394V751.7H395V753.8H396V751.7H397V753.7H398V751.1H399V753.6H400V751.4H401V794H400V794H399V794H398V794H397V794H396V794H395V794H394V794H393V794H392V794H391V794H390V794H389ZM407 772.7V722.1H408V723.7H409V724.5H410V722H411V772.7H410V772.7H409V772.7H408V772.7H407ZM411 776V753.2H412V754.8H413V753.4H414V753.2H415V753H416V753H417V754.1H418V755.9H419V756H420V753.8H421V753H422V753.3H423V754.9H424V776H423V776H422V776H421V776H420V776H419V776H418V776H417V776H416V776H415V776H414V776H413V776H412V776H411ZM424 790V762.1H425V790H424ZM460 794V748.2H461V747.2H462V747.8H463V747.7H464V748.2H465V747.2H466V749.7H467V749.4H468V747.1H469V747.3H470V749.3H471V747.2H472V749.7H473V747.8H474V748.5H475V748.5H476V747.1H477V747.2H478V747.2H479V748.4H480V748.4H481V747.1H482V749.4H483V747.5H484V747.2H485V747.6H486V749.9H487V747.9H488V794H487V794H486V794H485V794H484V794H483V794H482V794H481V794H480V794H479V794H478V794H477V794H476V794H475V794H474V794H473V794H472V794H471V794H470V794H469V794H468V794H467V794H466V794H465V794H464V794H463V794H462V794H461V794H460ZM488 772.5V736.5H489V739.7H490V741.8H491V772.5H490V772.5H489V772.5H488ZM491 794V748.7H492V747.5H493V748H494V749.4H495V748.9H496V748H497V747.4H498V747.4H499V748.6H500V748H501V747H502V748.5H503V749.5H504V748.9H505V749.4H506V749.5H507V794H506V794H505V794H504V794H503V794H502V794H501V794H500V794H499V794H498V794H497V794H496V794H495V794H494V794H493V794H492V794H491ZM507 794V736.2H508V739.1H509V739.5H510V794H509V794H508V794H507ZM519 770V692.6H520V693H521V692.9H522V695.2H523V770H522V770H521V770H520V770H519ZM523 770V701.4H524V700.9H525V701.2H526V700H527V770H526V770H525V770H524V770H523Z"/>
<path fill="#262820" d="M303.3 748.6h0.9v22.5h-0.9ZM359.9 684.9h0.9v20.4h-0.9ZM368 685.2h0.9v36.1h-0.9ZM374.9 687.1h0.9v19.5h-0.9ZM382.3 724.1h0.9v14h-0.9ZM392.3 751.1h0.9v12.6h-0.9ZM400 753.6h0.9v21.3h-0.9ZM418.8 754h0.9v4.9h-0.9ZM417.5 755.9h0.9v5.7h-0.9ZM470.6 749.5h0.9v12.3h-0.9ZM464.2 748.4h0.9v26.8h-0.9ZM475.4 748.5h0.9v15.8h-0.9ZM465.9 749.6h0.9v10.1h-0.9ZM495.3 747.6h0.9v24.1h-0.9ZM505.6 749.3h0.9v26.2h-0.9Z"/>
<path fill="#262820" d="M399.8 736.3h0.9v3.8h-0.9ZM406 734.4h0.9v11.2h-0.9ZM419.2 748.9h0.9v2.3h-0.9ZM414.5 746.5h0.9v4.4h-0.9ZM419.2 778.1h0.9v10.3h-0.9ZM423.1 776.1h0.9v8.7h-0.9ZM432.2 747.6h0.9v19.2h-0.9ZM449 748.4h0.9v23.8h-0.9ZM517.6 748.3h0.9v24.8h-0.9ZM547.8 748.6h0.9v22.6h-0.9ZM544.1 747.7h0.9v27.5h-0.9Z"/>
<path fill="#2a2b24" d="M528 775h2.5v19h-2.5ZM534.5 762h2.5v32h-2.5ZM309.5 748h1v40h-1Z"/>
<rect x="646" y="681" width="496" height="1" fill="#404348"/>
<rect x="646" y="709" width="496" height="1" fill="#404348"/>
<rect x="646" y="737" width="496" height="1" fill="#404348"/>
<rect x="646" y="766" width="496" height="1" fill="#404348"/>
<rect x="646" y="794" width="496" height="1" fill="#404348"/>
<rect x="694" y="681" width="1" height="114" fill="#404348"/>
<rect x="776" y="681" width="1" height="114" fill="#404348"/>
<rect x="859" y="681" width="1" height="114" fill="#404348"/>
<rect x="941" y="681" width="1" height="114" fill="#404348"/>
<rect x="1024" y="681" width="1" height="114" fill="#404348"/>
<rect x="1106" y="681" width="1" height="114" fill="#404348"/>
<text x="642.5" y="685.8" font-size="12" text-anchor="end" fill="#ccccdc" textLength="28.2" lengthAdjust="spacingAndGlyphs">100%</text>
<text x="642.5" y="713.8" font-size="12" text-anchor="end" fill="#ccccdc" textLength="22.1" lengthAdjust="spacingAndGlyphs">75%</text>
<text x="642.5" y="741.8" font-size="12" text-anchor="end" fill="#ccccdc" textLength="22.1" lengthAdjust="spacingAndGlyphs">50%</text>
<text x="642.5" y="770.8" font-size="12" text-anchor="end" fill="#ccccdc" textLength="22.1" lengthAdjust="spacingAndGlyphs">25%</text>
<text x="642.5" y="798.8" font-size="12" text-anchor="end" fill="#ccccdc" textLength="16" lengthAdjust="spacingAndGlyphs">0%</text>
<text x="694.5" y="814" font-size="12" text-anchor="middle" fill="#ccccdc">01/29 16:00</text>
<text x="776.5" y="814" font-size="12" text-anchor="middle" fill="#ccccdc">01/30 00:00</text>
<text x="859.5" y="814" font-size="12" text-anchor="middle" fill="#ccccdc">01/30 08:00</text>
<text x="941.5" y="814" font-size="12" text-anchor="middle" fill="#ccccdc">01/30 16:00</text>
<text x="1024.5" y="814" font-size="12" text-anchor="middle" fill="#ccccdc">01/31 00:00</text>
<text x="1106.5" y="814" font-size="12" text-anchor="middle" fill="#ccccdc">01/31 08:00</text>
<rect x="623" y="832" width="14" height="4" rx="1" fill="#7EB26D"/>
<text x="645" y="838" font-size="12" text-anchor="start" fill="#ccccdc">sdb</text>
<rect x="675" y="832" width="14" height="4" rx="1" fill="#EAB839"/>
<text x="697" y="838" font-size="12" text-anchor="start" fill="#ccccdc">sdc</text>
<path fill="#33342b" d="M885 747.5H886V794.5H885ZM886 747.5H887V794.5H886ZM887 747.5H888V794.5H887ZM888 747.5H889V794.5H888ZM889 747.5H890V794.5H889ZM890 747.5H891V794.5H890ZM891 747.5H892V794.5H891ZM892 747.5H893V794.5H892ZM893 747.5H894V794.5H893ZM894 747.5H895V794.5H894ZM895 724.9H896V794.5H895ZM896 724.9H897V794.5H896ZM899 694H900V794.5H899ZM900 694H901V794.5H900ZM901 694H902V794.5H901ZM902 694H903V794.5H902ZM906 694H907V794.5H906ZM907 694H908V794.5H907ZM908 694H909V794.5H908ZM909 703H910V794.5H909ZM910 703H911V794.5H910ZM911 749H912V794.5H911ZM912 749H913V794.5H912ZM913 749H914V794.5H913ZM914 749H915V794.5H914ZM915 749H916V794.5H915ZM916 749H917V794.5H916ZM917 749H918V794.5H917ZM918 749H919V794.5H918ZM919 772H920V794.5H919ZM920 749H921V794.5H920ZM921 749H922V794.5H921ZM922 749H923V794.5H922ZM923 749H924V794.5H923ZM924 749H925V794.5H924ZM925 749H926V794.5H925ZM926 749H927V794.5H926ZM927 749H928V794.5H927ZM928 749H929V794.5H928ZM929 749H930V794.5H929ZM930 749H931V794.5H930ZM931 749H932V794.5H931ZM932 749H933V794.5H932ZM933 749H934V794.5H933ZM934 749H935V794.5H934ZM935 686.8H936V794.5H935ZM936 686.8H937V794.5H936ZM937 686.8H938V794.5H937ZM938 686.8H939V794.5H938ZM939 686.8H940V794.5H939ZM940 685.4H941V794.5H940ZM941 685.6H942V794.5H941ZM942 685.7H943V794.5H942ZM943 685.9H944V794.5H943ZM944 686.1H945V794.5H944ZM945 686.2H946V794.5H945ZM946 686.4H947V794.5H946ZM947 686.6H948V794.5H947ZM948 686.7H949V794.5H948ZM949 686.9H950V794.5H949ZM950 687.1H951V794.5H950ZM951 687.4H952V794.5H951ZM952 687.7H953V794.5H952ZM953 688H954V794.5H953ZM954 688.3H955V794.5H954ZM955 688.6H956V794.5H955ZM956 688.9H957V794.5H956ZM957 733H958V794.5H957ZM958 733H959V794.5H958ZM959 733H960V794.5H959ZM961 685H962V794.5H961ZM962 685H963V794.5H962ZM963 685H964V794.5H963ZM964 716.2H965V794.5H964ZM965 717.6H966V794.5H965ZM966 718.9H967V794.5H966ZM967 720.2H968V794.5H967ZM968 721.6H969V794.5H968ZM969 722.9H970V794.5H969ZM970 724.3H971V794.5H970ZM971 725.6H972V794.5H971ZM972 724.8H973V794.5H972ZM973 722.5H974V794.5H973ZM974 720.1H975V794.5H974ZM975 717.7H976V794.5H975ZM976 715.4H977V794.5H976ZM977 692H978V794.5H977ZM978 692H979V794.5H978ZM979 713H980V794.5H979ZM980 751H981V794.5H980ZM981 751H982V794.5H981ZM982 751H983V794.5H982ZM983 751H984V794.5H983ZM984 751H985V794.5H984ZM985 751H986V794.5H985ZM986 751H987V794.5H986ZM987 751H988V794.5H987ZM988 751H989V794.5H988ZM989 751H990V794.5H989ZM990 751H991V794.5H990ZM991 751H992V794.5H991ZM992 751H993V794.5H992ZM993 751H994V794.5H993ZM994 684.5H995V794.5H994ZM995 684.5H996V794.5H995ZM996 684.5H997V794.5H996ZM997 706H998V794.5H997ZM998 709.1H999V794.5H998ZM999 712.1H1000V794.5H999ZM1000 715.2H1001V794.5H1000ZM1001 718.2H1002V794.5H1001ZM1002 721.3H1003V794.5H1002ZM1003 724.3H1004V794.5H1003ZM1004 727.3H1005V794.5H1004ZM1005 730.4H1006V794.5H1005ZM1006 733.4H1007V794.5H1006ZM1007 736.5H1008V794.5H1007ZM1008 738.7H1009V794.5H1008ZM1009 738.5H1010V794.5H1009ZM1010 738.3H1011V794.5H1010ZM1011 738.1H1012V794.5H1011ZM1012 742.8H1013V794.5H1012ZM1013 743.5H1014V794.5H1013ZM1014 744.2H1015V794.5H1014ZM1015 745H1016V794.5H1015ZM1016 745.7H1017V794.5H1016ZM1017 746.4H1018V794.5H1017ZM1018 747.1H1019V794.5H1018ZM1019 747.9H1020V794.5H1019ZM1020 748.6H1021V794.5H1020ZM1021 749.3H1022V794.5H1021ZM1022 770H1023V794.5H1022ZM1023 770H1024V794.5H1023ZM1024 749.7H1025V794.5H1024ZM1025 749.7H1026V794.5H1025ZM1026 749.7H1027V794.5H1026ZM1027 749.7H1028V794.5H1027ZM1028 749.7H1029V794.5H1028ZM1029 749.7H1030V794.5H1029ZM1030 748H1031V794.5H1030ZM1031 748H1032V794.5H1031ZM1032 748H1033V794.5H1032ZM1033 748H1034V794.5H1033ZM1034 748H1035V794.5H1034ZM1035 748H1036V794.5H1035ZM1036 748H1037V794.5H1036ZM1037 719.1H1038V794.5H1037ZM1038 720.6H1039V794.5H1038ZM1039 722.2H1040V794.5H1039ZM1040 748H1041V794.5H1040ZM1041 748H1042V794.5H1041ZM1042 748H1043V794.5H1042ZM1043 748H1044V794.5H1043ZM1044 748H1045V794.5H1044ZM1045 748H1046V794.5H1045ZM1046 748H1047V794.5H1046ZM1047 739.5H1048V794.5H1047ZM1048 748H1049V794.5H1048ZM1049 748H1050V794.5H1049ZM1050 748H1051V794.5H1050ZM1051 748H1052V794.5H1051ZM1052 748H1053V794.5H1052ZM1053 748H1054V794.5H1053ZM1054 748H1055V794.5H1054ZM1055 748H1056V794.5H1055ZM1056 748H1057V794.5H1056ZM1057 748H1058V794.5H1057ZM1058 748H1059V794.5H1058ZM1059 748H1060V794.5H1059ZM1060 748H1061V794.5H1060ZM1061 748H1062V794.5H1061ZM1062 749.7H1063V794.5H1062ZM1063 749.7H1064V794.5H1063ZM1064 749.7H1065V794.5H1064ZM1065 749.7H1066V794.5H1065ZM1066 749.7H1067V794.5H1066ZM1067 736.3H1068V794.5H1067ZM1068 737.5H1069V794.5H1068ZM1069 749.7H1070V794.5H1069ZM1070 749.7H1071V794.5H1070ZM1071 749.7H1072V794.5H1071ZM1072 749.7H1073V794.5H1072ZM1073 749.7H1074V794.5H1073ZM1074 749.7H1075V794.5H1074ZM1075 749.7H1076V794.5H1075ZM1076 749.7H1077V794.5H1076ZM1077 749.7H1078V794.5H1077ZM1078 749.7H1079V794.5H1078ZM1079 749.7H1080V794.5H1079ZM1080 749.7H1081V794.5H1080ZM1081 749.7H1082V794.5H1081ZM1082 749.7H1083V794.5H1082ZM1083 749.7H1084V794.5H1083ZM1084 749.7H1085V794.5H1084ZM1085 749.7H1086V794.5H1085ZM1086 749.7H1087V794.5H1086ZM1087 749.7H1088V794.5H1087ZM1088 749.7H1089V794.5H1088ZM1089 749.7H1090V794.5H1089ZM1090 749.7H1091V794.5H1090ZM1091 749.7H1092V794.5H1091ZM1092 749.7H1093V794.5H1092ZM1093 749.7H1094V794.5H1093ZM1094 749.7H1095V794.5H1094ZM1095 749.7H1096V794.5H1095ZM1096 749.7H1097V794.5H1096ZM1097 733H1098V794.5H1097ZM1098 733H1099V794.5H1098ZM1099 741H1100V794.5H1099ZM1100 741H1101V794.5H1100ZM1101 741H1102V794.5H1101ZM1102 741H1103V794.5H1102ZM1103 741H1104V794.5H1103ZM1104 741H1105V794.5H1104ZM1105 741H1106V794.5H1105ZM1106 684.5H1107V794.5H1106ZM1107 684.5H1108V794.5H1107ZM1108 684.5H1109V794.5H1108ZM1109 684.5H1110V794.5H1109ZM1110 684.5H1111V794.5H1110ZM1111 684.5H1112V794.5H1111ZM1112 684.5H1113V794.5H1112ZM1113 684.5H1114V794.5H1113ZM1114 684.5H1115V794.5H1114ZM1115 684.5H1116V794.5H1115ZM1116 735H1117V794.5H1116ZM1117 735H1118V794.5H1117ZM1118 735H1119V794.5H1118ZM1119 735H1120V794.5H1119ZM1120 752.7H1121V794.5H1120ZM1121 752.7H1122V794.5H1121ZM1122 752.7H1123V794.5H1122ZM1123 752.7H1124V794.5H1123ZM1124 752.7H1125V794.5H1124ZM1125 752.7H1126V794.5H1125ZM1126 740H1127V794.5H1126ZM1127 740H1128V794.5H1127ZM1128 740H1129V794.5H1128ZM1129 740H1130V794.5H1129ZM1130 746.5H1131V794.5H1130ZM1131 745.9H1132V794.5H1131ZM1132 745.3H1133V794.5H1132ZM1133 745.6H1134V794.5H1133ZM1134 746.7H1135V794.5H1134ZM1135 747.8H1136V794.5H1135ZM1136 749H1137V794.5H1136ZM1137 750.1H1138V794.5H1137ZM1138 751.3H1139V794.5H1138ZM1139 752.4H1140V794.5H1139ZM1140 753.5H1141V794.5H1140ZM1141 754.7H1142V794.5H1141ZM1142 755.8H1143V794.5H1142Z"/>
<path fill="#7EB26D" d="M911.5 794V746.2H912.5V747.4H913.5V747.4H914.5V748.2H915.5V746.1H916.5V746.2H917.5V746.1H918.5V794H917.5V794H916.5V794H915.5V794H914.5V794H913.5V794H912.5V794H911.5ZM918.5 794V769.2H919.5V770.6H920.5V794H919.5V794H918.5ZM920.5 794V746.1H921.5V746.8H922.5V746.1H923.5V746.3H924.5V746.6H925.5V748.1H926.5V747.1H927.5V746H928.5V746.2H929.5V746.1H930.5V748.3H931.5V748H932.5V747.9H933.5V748H934.5V747.7H935.5V748.7H935.6V794H935.5V794H934.5V794H933.5V794H932.5V794H931.5V794H930.5V794H929.5V794H928.5V794H927.5V794H926.5V794H925.5V794H924.5V794H923.5V794H922.5V794H921.5V794H920.5ZM940 719V684.3H941V682.8H942V684.9H943V683.6H944V684.8H945V684.2H946V684H947V684H948V684.3H949V684.2H950V719H949V719H948V719H947V719H946V719H945V719H944V719H943V719H942V719H941V719H940ZM950 740V684.2H951V686.4H952V686.6H953V687.9H954V686.7H955V686.5H956V687.5H957V740H956V740H955V740H954V740H953V740H952V740H951V740H950ZM940 794V789.1H941V790.4H942V789.6H943V789.1H944V789.1H945V789.8H946V789.2H947V789.6H948V790.1H949V789.5H950V789.1H951V789.7H952V789.2H953V789.2H954V789.1H955V789.4H956V789H957V794H956V794H955V794H954V794H953V794H952V794H951V794H950V794H949V794H948V794H947V794H946V794H945V794H944V794H943V794H942V794H941V794H940ZM957 790V731.3H958V732.7H959V730.5H960V790H959V790H958V790H957ZM994.8 745V683.1H995.8V684.1H996.5V745H995.8V745H994.8ZM996.5 745V701.5H997.5V704.6H998.5V709.6H999.5V712.8H1000.5V714.9H1001.5V716.8H1002.5V720.3H1003.5V725.1H1004.5V728.2H1005.5V730.8H1006.5V732.1H1007.5V736.4H1008V745H1007.5V745H1006.5V745H1005.5V745H1004.5V745H1003.5V745H1002.5V745H1001.5V745H1000.5V745H999.5V745H998.5V745H997.5V745H996.5ZM1010 794V740.4H1011V741.5H1012V794H1011V794H1010ZM1012 794V739.8H1013V743.3H1014V742.3H1015V743.5H1016V742.8H1017V744.6H1018V745.2H1019V745.9H1020V746H1021V747.9H1022V794H1021V794H1020V794H1019V794H1018V794H1017V794H1016V794H1015V794H1014V794H1013V794H1012ZM1024 794V747H1025V747H1026V746.8H1027V748.1H1028V746.7H1029V746.9H1030V794H1029V794H1028V794H1027V794H1026V794H1025V794H1024ZM1022 794V767H1023V768.2H1024V794H1023V794H1022ZM1030 794V769.6H1031V769.6H1032V768.7H1033V769.3H1034V769.1H1035V768.7H1036V768.7H1037V771.7H1038V768.7H1039V769H1040V768.9H1041V769.8H1042V768.7H1043V769.4H1044V769.1H1045V794H1044V794H1043V794H1042V794H1041V794H1040V794H1039V794H1038V794H1037V794H1036V794H1035V794H1034V794H1033V794H1032V794H1031V794H1030ZM1045 789V747.1H1046V745H1047V789H1046V789H1045ZM1047 789V736.8H1048V789H1047ZM1048 789V745.7H1049V747.8H1050V745.8H1051V745.7H1052V746.3H1053V745.3H1054V745H1055V745.8H1056V747.5H1057V746.6H1058V745.2H1059V746.4H1060V747.2H1061V745.2H1062V789H1061V789H1060V789H1059V789H1058V789H1057V789H1056V789H1055V789H1054V789H1053V789H1052V789H1051V789H1050V789H1049V789H1048ZM1097 746.7V731H1098V730.4H1099V746.7H1098V746.7H1097ZM1099 746.7V738.2H1100V738.2H1101V738.1H1102V738.4H1103V738H1104V738.5H1105V738H1106V746.7H1105V746.7H1104V746.7H1103V746.7H1102V746.7H1101V746.7H1100V746.7H1099ZM1106 685V683.2H1107V682.6H1108V681.5H1109V683.3H1110V681.6H1111V682.2H1112V682.4H1113V681.8H1114V681.8H1115V682.1H1116V685H1115V685H1114V685H1113V685H1112V685H1111V685H1110V685H1109V685H1108V685H1107V685H1106ZM1106 720V690.1H1107V692.2H1108V720H1107V720H1106ZM1116 760V732H1117V734H1118V732.1H1119V732.3H1120V760H1119V760H1118V760H1117V760H1116ZM1126 749V737.5H1127V737H1128V737H1129V737.4H1130V749H1129V749H1128V749H1127V749H1126Z"/>
<path fill="#EAB839" d="M885 794V744.5H886V746H887V745.8H888V747.2H889V744.7H890V744.7H891V746.1H892V745.8H893V744.8H894V745.9H895V745H895.8V794H895V794H894V794H893V794H892V794H891V794H890V794H889V794H888V794H887V794H886V794H885ZM895.8 794V723.7H896.8V721.9H897V794H896.8V794H895.8ZM899 794V691.1H900V693.4H901V691.4H902V691.2H902.7V794H902V794H901V794H900V794H899ZM906.4 794V692.9H907.4V692.2H908.4V691.1H909V794H908.4V794H907.4V794H906.4ZM909 794V700.9H910V701.3H910.7V794H910V794H909ZM935.6 794V683.9H936.6V685.1H937.6V683.8H938.6V684.1H939.6V683.8H940V794H939.6V794H938.6V794H937.6V794H936.6V794H935.6ZM940 761V716.1H941V718.9H942V716.5H943V718.9H944V761H943V761H942V761H941V761H940ZM944 766.2V717.1H945V718.6H946V720.8H947V720.9H948V720.5H949V722.5H950V778.8H949V776.2H948V773.8H947V771.2H946V768.8H945V766.2H944ZM950 789V724.3H951V725.3H952V727.4H953V731.8H954V732.4H955V733.9H956V736.5H957V789H956V789H955V789H954V789H953V789H952V789H951V789H950ZM961 766V682.1H962V683.9H963V682.8H963.3V766H963V766H962V766H961ZM963.3 765.8V712.3H964.3V715.6H965.3V715H966.3V716.5H967.3V717.7H968.3V720.6H969.3V720.4H970.3V722.5H971.3V722.9H972V765.8H971.3V765.8H970.3V765.8H969.3V765.8H968.3V765.8H967.3V765.8H966.3V765.8H965.3V765.8H964.3V765.8H963.3ZM972 765V722.5H973V720.9H974V717.9H975V715.3H976V713.1H977V711.2H977.5V765H977V765H976V765H975V765H974V765H973V765H972ZM977.5 765V690.1H978.5V689H979V765H978.5V765H977.5ZM979 765V710.7H980V765H979ZM980 794V748.2H981V750.2H982V750.6H983V748H984V748.1H985V749.5H986V749H987V748H988V749.5H989V750.7H990V748.5H991V748.4H992V749H993V750.6H994V748.2H995V748.3H996V748.1H997V749.2H998V748.7H999V748.2H1000V748.5H1001V748H1002V748.3H1003V750.9H1004V749H1005V748.2H1006V750.6H1007V748.4H1008V794H1007V794H1006V794H1005V794H1004V794H1003V794H1002V794H1001V794H1000V794H999V794H998V794H997V794H996V794H995V794H994V794H993V794H992V794H991V794H990V794H989V794H988V794H987V794H986V794H985V794H984V794H983V794H982V794H981V794H980ZM1008 794V735.9H1009V735.5H1010V735.4H1011V735.2H1012V794H1011V794H1010V794H1009V794H1008ZM1030 768.7V745.2H1031V747.3H1032V745.2H1033V745.2H1034V746.1H1035V747.5H1036V745.3H1037V768.7H1036V768.7H1035V768.7H1034V768.7H1033V768.7H1032V768.7H1031V768.7H1030ZM1037 768.7V717.8H1038V718.1H1039V720.2H1040V768.7H1039V768.7H1038V768.7H1037ZM1040 768.7V746.1H1041V747.7H1042V746.7H1043V745.8H1044V747.1H1045V768.7H1044V768.7H1043V768.7H1042V768.7H1041V768.7H1040ZM1062 794V747.1H1063V747.1H1064V794H1063V794H1062ZM1064 770V749.5H1065V747.6H1066V748.5H1067V770H1066V770H1065V770H1064ZM1067 794V733.6H1068V737H1069V794H1068V794H1067ZM1069 794V747.8H1070V746.9H1071V749.3H1072V747.4H1073V747H1074V746.9H1075V746.7H1076V746.8H1077V748.1H1078V746.8H1079V746.9H1080V747.3H1081V747.6H1082V747.1H1083V748.5H1084V746.9H1085V747.1H1086V747.2H1087V746.7H1088V746.8H1089V746.8H1090V748.3H1091V746.8H1092V748H1093V746.8H1094V748H1095V748H1096V747.1H1097V749.3H1098V748H1099V747.6H1100V746.7H1101V747.2H1102V746.9H1103V747.4H1104V749.3H1105V748.9H1106V746.7H1106.5V794H1106V794H1105V794H1104V794H1103V794H1102V794H1101V794H1100V794H1099V794H1098V794H1097V794H1096V794H1095V794H1094V794H1093V794H1092V794H1091V794H1090V794H1089V794H1088V794H1087V794H1086V794H1085V794H1084V794H1083V794H1082V794H1081V794H1080V794H1079V794H1078V794H1077V794H1076V794H1075V794H1074V794H1073V794H1072V794H1071V794H1070V794H1069ZM1106.5 794V685.2H1107.5V686.4H1108.5V684.7H1109.4V794H1108.5V794H1107.5V794H1106.5ZM1109.4 741V683.8H1110.4V686.1H1111.4V684.3H1112.4V686.7H1113.4V686.1H1113.8V741H1113.4V741H1112.4V741H1111.4V741H1110.4V741H1109.4ZM1113.8 794V685.9H1114.8V686.4H1115.8V683.8H1116V794H1115.8V794H1114.8V794H1113.8ZM1120 790.7V751.6H1121V750H1122V749.8H1123V750.1H1124V750.7H1125V749.7H1126V750.3H1127V751.5H1128V790.7H1127V790.7H1126V790.7H1125V790.7H1124V790.7H1123V790.7H1122V790.7H1121V790.7H1120ZM1128 789.4V745.4H1129V744.9H1130V743.8H1131V745.7H1132V742.5H1133V778.8H1132V781.5H1131V784.1H1130V786.7H1129V789.4H1128ZM1133 777.5V744H1134V745H1135V744.8H1136V749H1137V747.3H1138V751.2H1139V752H1140V753H1141V753.9H1142V752.9H1142.3V777.5H1142V777.5H1141V777.5H1140V777.5H1139V777.5H1138V777.5H1137V777.5H1136V777.5H1135V777.5H1134V777.5H1133Z"/>
<path fill="#262820" d="M894.1 747.2h0.9v28.7h-0.9ZM945.3 718.6h0.9v22.3h-0.9ZM953.7 730.4h0.9v14.9h-0.9ZM967.3 718.3h0.9v14.1h-0.9ZM981.6 750.1h0.9v10.8h-0.9ZM992 750.2h0.9v18.6h-0.9ZM990.3 750.3h0.9v10.3h-0.9ZM996.3 749.9h0.9v21.3h-0.9ZM1035.9 747.3h0.9v8.2h-0.9ZM1083.1 748.7h0.9v20.3h-0.9ZM1081.2 748.1h0.9v11.1h-0.9ZM1095.5 748h0.9v20.6h-0.9ZM1092.8 747.2h0.9v12.9h-0.9ZM1081.5 747.3h0.9v24.9h-0.9ZM1074.1 746.8h0.9v11.3h-0.9ZM1122.7 752.2h0.9v17.6h-0.9ZM1136.4 746.8h0.9v11h-0.9Z"/>
<path fill="#262820" d="M916.1 746.5h0.9v25.7h-0.9ZM934.6 748h0.9v13.3h-0.9ZM922.7 746.5h0.9v24.1h-0.9ZM946.7 685.7h0.9v17.4h-0.9ZM953.2 687.9h0.9v30.1h-0.9ZM942.7 791.9h0.9v2h-0.9ZM952.1 789.9h0.9v1.9h-0.9ZM1006.6 732.9h0.9v3.4h-0.9ZM1019.7 746h0.9v12.9h-0.9ZM1026.2 747.8h0.9v19.7h-0.9ZM1042.6 769.6h0.9v14.4h-0.9ZM1042.6 769h0.9v5.8h-0.9ZM1057 747.5h0.9v22.9h-0.9ZM1060.9 745.8h0.9v23.9h-0.9ZM1103.7 738.3h0.9v5h-0.9ZM1111 681.9h0.9v0.9h-0.9Z"/>
<rect x="1250" y="149" width="480" height="1" fill="#404348"/>
<rect x="1250" y="179" width="480" height="1" fill="#404348"/>
<rect x="1250" y="210" width="480" height="1" fill="#404348"/>
<rect x="1250" y="240" width="480" height="1" fill="#404348"/>
<rect x="1250" y="271" width="480" height="1" fill="#404348"/>
<rect x="1250" y="301" width="480" height="1" fill="#404348"/>
<rect x="1297" y="149" width="1" height="153" fill="#404348"/>
<rect x="1377" y="149" width="1" height="153" fill="#404348"/>
<rect x="1456" y="149" width="1" height="153" fill="#404348"/>
<rect x="1536" y="149" width="1" height="153" fill="#404348"/>
<rect x="1615" y="149" width="1" height="153" fill="#404348"/>
<rect x="1695" y="149" width="1" height="153" fill="#404348"/>
<text x="1246" y="153.8" font-size="12" text-anchor="end" fill="#ccccdc" textLength="44.2" lengthAdjust="spacingAndGlyphs">25 Mb/s</text>
<text x="1246" y="183.8" font-size="12" text-anchor="end" fill="#ccccdc" textLength="44.2" lengthAdjust="spacingAndGlyphs">20 Mb/s</text>
<text x="1246" y="214.8" font-size="12" text-anchor="end" fill="#ccccdc" textLength="44.2" lengthAdjust="spacingAndGlyphs">15 Mb/s</text>
<text x="1246" y="244.8" font-size="12" text-anchor="end" fill="#ccccdc" textLength="44.2" lengthAdjust="spacingAndGlyphs">10 Mb/s</text>
<text x="1246" y="275.8" font-size="12" text-anchor="end" fill="#ccccdc" textLength="37.3" lengthAdjust="spacingAndGlyphs">5 Mb/s</text>
<text x="1246" y="305.8" font-size="12" text-anchor="end" fill="#ccccdc" textLength="32" lengthAdjust="spacingAndGlyphs">0 kb/s</text>
<text x="1297.5" y="320" font-size="12" text-anchor="middle" fill="#ccccdc">01/29 16:00</text>
<text x="1377.5" y="320" font-size="12" text-anchor="middle" fill="#ccccdc">01/30 00:00</text>
<text x="1456.5" y="320" font-size="12" text-anchor="middle" fill="#ccccdc">01/30 08:00</text>
<text x="1536.5" y="320" font-size="12" text-anchor="middle" fill="#ccccdc">01/30 16:00</text>
<text x="1615.5" y="320" font-size="12" text-anchor="middle" fill="#ccccdc">01/31 00:00</text>
<text x="1695.5" y="320" font-size="12" text-anchor="middle" fill="#ccccdc">01/31 08:00</text>
<rect x="1211" y="338" width="14" height="4" rx="1" fill="#7EB26D"/>
<text x="1233" y="344" font-size="12" text-anchor="start" fill="#ccccdc">recieved</text>
<rect x="1289.2" y="338" width="14" height="4" rx="1" fill="#EAB839"/>
<text x="1311.2" y="344" font-size="12" text-anchor="start" fill="#ccccdc">sent</text>
<rect x="1481.5" y="300" width="248.5" height="2" fill="#b9b04a"/>
<path fill="#EAB839" stroke="#EAB839" stroke-width="1" stroke-linejoin="round" d="M1495 301.5L1495 301L1495.6 228L1496.5 224.5L1497.4 230L1498.2 301L1498.2 301.5ZM1502 301.5L1502 301L1502.2 264L1503 200L1503.8 177L1504.6 176.4L1505.4 200L1506 301L1506 301.5ZM1530 301.5L1530 301L1530 233.6L1532 206.4L1534 231.8L1536 251.8L1537 262L1538.5 252.7L1540 268L1541 270L1542.5 230.9L1543.5 260L1544 273.6L1546 277.3L1548 282.7L1550 286L1551.4 288.2L1551.6 301L1551.6 301.5ZM1696.4 301.5L1696.4 301L1698 250L1698.5 196.4L1699.5 161.8L1700.5 196.4L1702 200L1702.5 260L1703.6 301L1703.6 301.5Z"/>
<path fill="#6f8a4c" d="M1534 300V294L1536 291L1539 295L1542 292L1545 296L1548 294V300Z"/>
<rect x="1262" y="415" width="468" height="1" fill="#404348"/>
<rect x="1262" y="453" width="468" height="1" fill="#404348"/>
<rect x="1262" y="491" width="468" height="1" fill="#404348"/>
<rect x="1262" y="529" width="468" height="1" fill="#404348"/>
<rect x="1262" y="567" width="468" height="1" fill="#404348"/>
<rect x="1306" y="415" width="1" height="153" fill="#404348"/>
<rect x="1384" y="415" width="1" height="153" fill="#404348"/>
<rect x="1462" y="415" width="1" height="153" fill="#404348"/>
<rect x="1540" y="415" width="1" height="153" fill="#404348"/>
<rect x="1618" y="415" width="1" height="153" fill="#404348"/>
<rect x="1696" y="415" width="1" height="153" fill="#404348"/>
<text x="1256.5" y="419.8" font-size="12" text-anchor="end" fill="#ccccdc" textLength="44.2" lengthAdjust="spacingAndGlyphs">10 Mb/s</text>
<text x="1256.5" y="457.8" font-size="12" text-anchor="end" fill="#ccccdc" textLength="54.5" lengthAdjust="spacingAndGlyphs">7.50 Mb/s</text>
<text x="1256.5" y="495.8" font-size="12" text-anchor="end" fill="#ccccdc" textLength="37.3" lengthAdjust="spacingAndGlyphs">5 Mb/s</text>
<text x="1256.5" y="533.8" font-size="12" text-anchor="end" fill="#ccccdc" textLength="54.5" lengthAdjust="spacingAndGlyphs">2.50 Mb/s</text>
<text x="1256.5" y="571.8" font-size="12" text-anchor="end" fill="#ccccdc" textLength="32" lengthAdjust="spacingAndGlyphs">0 kb/s</text>
<text x="1306.5" y="586" font-size="12" text-anchor="middle" fill="#ccccdc">01/29 16:00</text>
<text x="1384.5" y="586" font-size="12" text-anchor="middle" fill="#ccccdc">01/30 00:00</text>
<text x="1462.5" y="586" font-size="12" text-anchor="middle" fill="#ccccdc">01/30 08:00</text>
<text x="1540.5" y="586" font-size="12" text-anchor="middle" fill="#ccccdc">01/30 16:00</text>
<text x="1618.5" y="586" font-size="12" text-anchor="middle" fill="#ccccdc">01/31 00:00</text>
<text x="1696.5" y="586" font-size="12" text-anchor="middle" fill="#ccccdc">01/31 08:00</text>
<rect x="1211" y="604" width="14" height="4" rx="1" fill="#7EB26D"/>
<text x="1233" y="610" font-size="12" text-anchor="start" fill="#ccccdc">recieved</text>
<rect x="1289.2" y="604" width="14" height="4" rx="1" fill="#EAB839"/>
<text x="1311.2" y="610" font-size="12" text-anchor="start" fill="#ccccdc">sent</text>
<rect x="1487.3" y="565.5" width="242.7" height="2" fill="#8f9a5a"/>
<path fill="#EAB839" stroke="#EAB839" stroke-width="1" stroke-linejoin="round" d="M1499.6 567L1499.6 567L1501 454L1502 480L1502.7 567L1502.7 567ZM1507 567L1507 567L1508 451L1508.8 427.7L1509.5 451L1510.5 567L1510.5 567ZM1534.2 567L1534.2 567L1534.5 455L1536 450L1537.5 442.3L1538.5 470L1539.5 484L1540.5 487L1541.5 512L1542.5 500L1543.5 506L1545 504L1546 520L1547 516.8L1548.5 518.6L1549.5 530L1551 527.7L1552 535L1553 531.4L1554.5 547L1554.6 567L1554.6 567ZM1696.9 567L1696.9 567L1697.5 524L1698.5 456.8L1700.4 434L1701.5 470L1702.5 469.5L1703.5 524L1704.5 567L1704.5 567Z"/>
<path fill="#3a3d2c" d="M1540 565V553L1543 550L1546 553L1549 551V565Z"/>
<rect x="1264" y="681" width="466" height="1" fill="#404348"/>
<rect x="1264" y="714" width="466" height="1" fill="#404348"/>
<rect x="1264" y="747" width="466" height="1" fill="#404348"/>
<rect x="1264" y="780" width="466" height="1" fill="#404348"/>
<rect x="1264" y="813" width="466" height="1" fill="#404348"/>
<rect x="1309" y="681" width="1" height="133" fill="#404348"/>
<rect x="1386" y="681" width="1" height="133" fill="#404348"/>
<rect x="1464" y="681" width="1" height="133" fill="#404348"/>
<rect x="1541" y="681" width="1" height="133" fill="#404348"/>
<rect x="1619" y="681" width="1" height="133" fill="#404348"/>
<rect x="1696" y="681" width="1" height="133" fill="#404348"/>
<text x="1259.3" y="685.8" font-size="12" text-anchor="end" fill="#ccccdc" textLength="33.7" lengthAdjust="spacingAndGlyphs">1 kB/s</text>
<text x="1259.3" y="718.8" font-size="12" text-anchor="end" fill="#ccccdc" textLength="57.4" lengthAdjust="spacingAndGlyphs">0.500 kB/s</text>
<text x="1259.3" y="751.8" font-size="12" text-anchor="end" fill="#ccccdc" textLength="33.7" lengthAdjust="spacingAndGlyphs">0 kB/s</text>
<text x="1259.3" y="784.8" font-size="12" text-anchor="end" fill="#ccccdc" textLength="54.7" lengthAdjust="spacingAndGlyphs">-0.50 kB/s</text>
<text x="1259.3" y="817.8" font-size="12" text-anchor="end" fill="#ccccdc" textLength="37.8" lengthAdjust="spacingAndGlyphs">-1 kB/s</text>
<text x="1309.5" y="832" font-size="12" text-anchor="middle" fill="#ccccdc">01/29 16:00</text>
<text x="1386.5" y="832" font-size="12" text-anchor="middle" fill="#ccccdc">01/30 00:00</text>
<text x="1464.5" y="832" font-size="12" text-anchor="middle" fill="#ccccdc">01/30 08:00</text>
<text x="1541.5" y="832" font-size="12" text-anchor="middle" fill="#ccccdc">01/30 16:00</text>
<text x="1619.5" y="832" font-size="12" text-anchor="middle" fill="#ccccdc">01/31 00:00</text>
<text x="1696.5" y="832" font-size="12" text-anchor="middle" fill="#ccccdc">01/31 08:00</text>
<text x="1481.7" y="729" font-size="14" text-anchor="middle" fill="#ccccdc">No data</text>
<path d="M1192.5 632H1224.5L1192.5 664Z" fill="#d8175d"/>
<rect x="1199.7" y="637" width="2.3" height="5.5" fill="#fff"/><rect x="1199.7" y="643.4" width="2.3" height="1.9" fill="#fff"/>
<text x="306" y="121.2" font-size="15" text-anchor="middle" fill="#d9dae3" textLength="87.2" lengthAdjust="spacingAndGlyphs" stroke="#d9dae3" stroke-width="0.35">CPU Storage1</text>
<text x="894" y="121.2" font-size="15" text-anchor="middle" fill="#d9dae3" textLength="88.8" lengthAdjust="spacingAndGlyphs" stroke="#d9dae3" stroke-width="0.35">CPU Storage2</text>
<text x="1482" y="121.2" font-size="15" text-anchor="middle" fill="#d9dae3" textLength="185.8" lengthAdjust="spacingAndGlyphs" stroke="#d9dae3" stroke-width="0.35">Network Bandwidth Storage1</text>
<text x="306" y="387.2" font-size="15" text-anchor="middle" fill="#d9dae3" textLength="181.9" lengthAdjust="spacingAndGlyphs" stroke="#d9dae3" stroke-width="0.35">Memory Utilization Storage1</text>
<text x="894" y="387.2" font-size="15" text-anchor="middle" fill="#d9dae3" textLength="182.9" lengthAdjust="spacingAndGlyphs" stroke="#d9dae3" stroke-width="0.35">Memory Utilization Storage2</text>
<text x="1482" y="387.2" font-size="15" text-anchor="middle" fill="#d9dae3" textLength="189.5" lengthAdjust="spacingAndGlyphs" stroke="#d9dae3" stroke-width="0.35">Network Bandwidth Storage 2</text>
<text x="306" y="653.2" font-size="15" text-anchor="middle" fill="#d9dae3" textLength="156.4" lengthAdjust="spacingAndGlyphs" stroke="#d9dae3" stroke-width="0.35">Disk Utilization Storage1</text>
<text x="894" y="653.2" font-size="15" text-anchor="middle" fill="#d9dae3" textLength="157.4" lengthAdjust="spacingAndGlyphs" stroke="#d9dae3" stroke-width="0.35">Disk Utilization Storage2</text>
<text x="1482" y="653.2" font-size="15" text-anchor="middle" fill="#d9dae3" textLength="105" lengthAdjust="spacingAndGlyphs" stroke="#d9dae3" stroke-width="0.35">Disk Throughput</text>
<text x="42.5" y="33" font-size="19" text-anchor="start" fill="#d5d6e0" textLength="62" lengthAdjust="spacingAndGlyphs">mehran</text>
<text x="112.5" y="33" font-size="19" text-anchor="start" fill="#d5d6e0">/</text>
<text x="128.5" y="33" font-size="19" text-anchor="start" fill="#d5d6e0" textLength="312" lengthAdjust="spacingAndGlyphs">Partial_Monitoring-Mehran Dashboard</text>
<text x="25.3" y="80" font-size="12" text-anchor="start" fill="#6e9fff" textLength="31.9" lengthAdjust="spacingAndGlyphs" stroke="#6e9fff" stroke-width="0.3">Hosts</text>
<text x="78.6" y="80.3" font-size="14.5" text-anchor="start" fill="#ccccdc" textLength="15" lengthAdjust="spacingAndGlyphs">S1</text>
<text x="145.2" y="79.5" font-size="12" text-anchor="start" fill="#6e9fff" textLength="69" lengthAdjust="spacingAndGlyphs" stroke="#6e9fff" stroke-width="0.3">timeVariable</text>
<text x="236.9" y="80" font-size="14.5" text-anchor="start" fill="#ccccdc" textLength="22.5" lengthAdjust="spacingAndGlyphs">10s</text>
<text x="1505.6" y="31.8" font-size="14" text-anchor="start" fill="#a9aab4" textLength="71.6" lengthAdjust="spacingAndGlyphs">Last 2 days</text>
</svg>
</body></html>
